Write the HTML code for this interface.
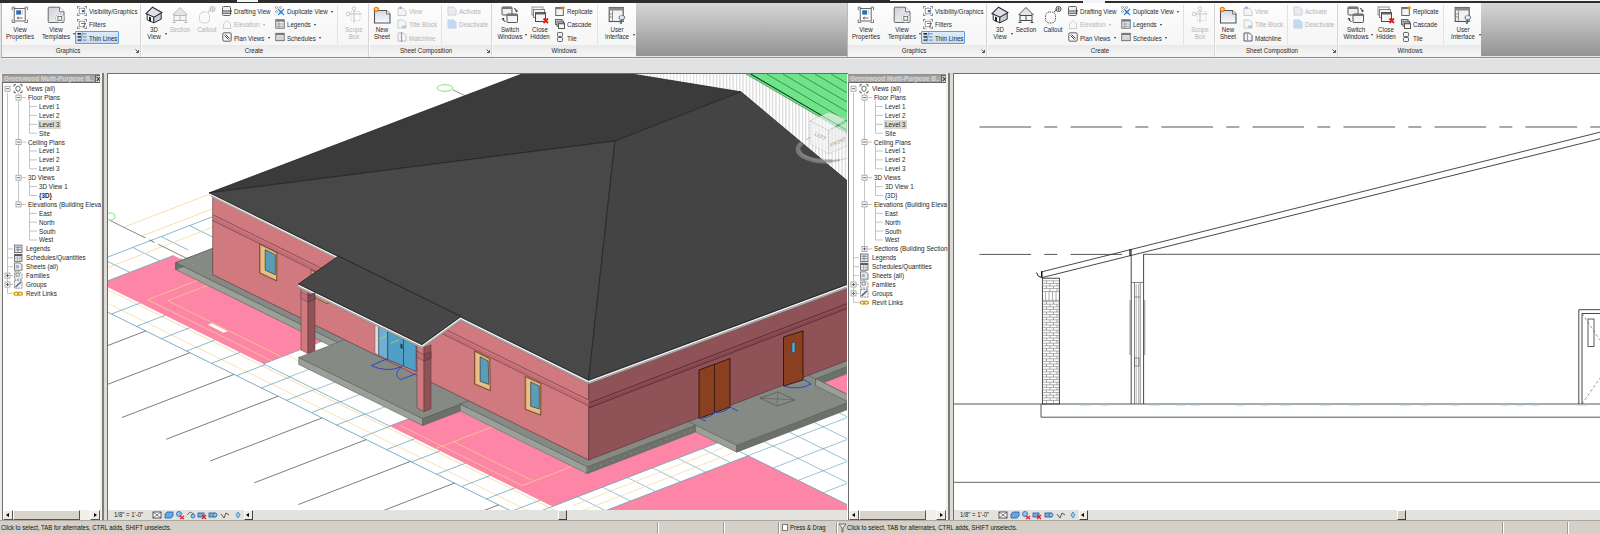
<!DOCTYPE html>
<html><head><meta charset="utf-8">
<style>
*{margin:0;padding:0;box-sizing:border-box}
html,body{width:1600px;height:534px;overflow:hidden;background:#e1e2e4;font-family:"Liberation Sans",sans-serif;font-size:6px;color:#333}
.a{position:absolute}
.t{position:absolute;white-space:nowrap;font-size:7px;line-height:7px;color:#2a2a2a;transform:scaleX(0.88);transform-origin:0 50%}
.c{transform-origin:50% 50%}
</style></head><body>
<div class="a" style="left:0px;top:0px;width:1600px;height:3px;background:#2d2d2d;"></div>
<div class="a" style="left:237px;top:0px;width:21px;height:2px;background:#f4f4f4;"></div>
<div class="a" style="left:890px;top:0px;width:710px;height:1px;background:#f8f8f8;"></div>
<div class="a" style="left:1083px;top:0px;width:22px;height:2.5px;background:#f4f4f4;"></div>
<div class="a" style="left:1px;top:3px;width:635px;height:42px;background:linear-gradient(#fefefe,#f8f8f8 60%,#f6f6f6);"></div>
<div class="a" style="left:1px;top:44.5px;width:635px;height:12.5px;background:linear-gradient(#e9e9e9,#f1f1f1 50%,#f5f5f5);"></div>
<div class="a" style="left:1px;top:57px;width:635px;height:1px;background:#8e8e8e;"></div>
<div class="a" style="left:1px;top:58px;width:635px;height:1px;background:#f0f0f0;"></div>
<div class="a" style="left:1px;top:3px;width:1px;height:54px;background:#b9b9b9;"></div>
<div class="a" style="left:140px;top:4px;width:1px;height:53px;background:#d6d6d6;"></div>
<div class="a" style="left:141px;top:4px;width:1px;height:53px;background:#fafafa;"></div>
<div class="a" style="left:368px;top:4px;width:1px;height:53px;background:#d6d6d6;"></div>
<div class="a" style="left:369px;top:4px;width:1px;height:53px;background:#fafafa;"></div>
<div class="a" style="left:491px;top:4px;width:1px;height:53px;background:#d6d6d6;"></div>
<div class="a" style="left:492px;top:4px;width:1px;height:53px;background:#fafafa;"></div>
<div class="a" style="left:337px;top:5px;width:1px;height:39px;background:#e2e2e2;"></div>
<div class="a" style="left:441px;top:5px;width:1px;height:39px;background:#e2e2e2;"></div>
<div class="a" style="left:597px;top:5px;width:1px;height:39px;background:#e2e2e2;"></div>
<div class="t c" style="left:28px;width:80px;text-align:center;top:47.0px;">Graphics</div>
<div class="t c" style="left:214px;width:80px;text-align:center;top:47.0px;">Create</div>
<div class="t c" style="left:386px;width:80px;text-align:center;top:47.0px;">Sheet Composition</div>
<div class="t c" style="left:524px;width:80px;text-align:center;top:47.0px;">Windows</div>
<svg class="a" style="left:135px;top:49px" width="4" height="4"><path d="M0.5 0.5L3.2 3.2M3.5 1V3.5H1" fill="none" stroke="#444" stroke-width="0.9"/></svg>
<svg class="a" style="left:486px;top:49px" width="4" height="4"><path d="M0.5 0.5L3.2 3.2M3.5 1V3.5H1" fill="none" stroke="#444" stroke-width="0.9"/></svg>
<svg class="a" style="left:11px;top:6px" width="18" height="18" viewBox="0 0 18 18"><path d="M1.2 4.2V1.2H4.2M13.5 1.2H16.5V4.2M16.5 13.5V16.5H13.5M4.2 16.5H1.2V13.5" fill="none" stroke="#6a6a6a" stroke-width="0.9"/><rect x="3.2" y="2.5" width="11" height="12.5" fill="#fdfdfd" stroke="#5a5a5a" stroke-width="0.9"/><rect x="5.2" y="4.3" width="4.8" height="4.3" fill="#2f6db3"/><path d="M11.3 4.3V8.6" stroke="#aaa" stroke-width="0.8"/><path d="M6.2 12H11.5M6.2 12L7.6 10.9M6.2 12L7.6 13.1" stroke="#444" stroke-width="0.8" fill="none"/></svg>
<div class="t c" style="left:-20px;width:80px;text-align:center;top:26.0px;">View</div>
<div class="t c" style="left:-20px;width:80px;text-align:center;top:33.0px;">Properties</div>
<svg class="a" style="left:47px;top:6px" width="18" height="18" viewBox="0 0 18 18"><defs><linearGradient id="gvt" x1="0" y1="0" x2="1" y2="1"><stop offset="0" stop-color="#c9ced6"/><stop offset="1" stop-color="#fbfbfb"/></linearGradient></defs><path d="M1.2 2.2Q1.2 1.2 2.2 1.2H12.5L17 5.8V15.5Q17 16.5 16 16.5H2.2Q1.2 16.5 1.2 15.5Z" fill="url(#gvt)" stroke="#5a5a5a" stroke-width="0.9"/><path d="M12.5 1.2V5.8H17" fill="#fff" stroke="#5a5a5a" stroke-width="0.8"/><circle cx="12.8" cy="12.3" r="4.3" fill="#fff" stroke="#888" stroke-width="0.7" stroke-dasharray="1.5 1"/><rect x="10.8" y="10.3" width="4" height="4" fill="#eee" stroke="#555" stroke-width="0.8"/></svg>
<div class="t c" style="left:16px;width:80px;text-align:center;top:26.0px;">View</div>
<div class="t c" style="left:16px;width:80px;text-align:center;top:33.0px;">Templates</div>
<svg class="a" style="left:145px;top:6px" width="18" height="18" viewBox="0 0 18 18"><path d="M2.2 7.2V13.8L8.8 16.8V10.8Z" fill="#fff" stroke="#2e2e2e" stroke-width="1"/><path d="M8.8 16.8L16.2 13.2V7L8.8 10.8Z" fill="#c9ced6" stroke="#2e2e2e" stroke-width="1"/><path d="M1 7.6L7.5 1.2L16.8 6.6L9 11.2Z" fill="#dde1e8" stroke="#2e2e2e" stroke-width="1.1"/><path d="M4 10.5V15L6 15.9V11.4Z" fill="#1e1e1e"/></svg>
<div class="t c" style="left:114px;width:80px;text-align:center;top:26.0px;">3D</div>
<div class="t c" style="left:114px;width:80px;text-align:center;top:33.0px;">View</div>
<svg class="a" style="left:171px;top:6px" width="18" height="18" viewBox="0 0 18 18"><path d="M2 9.2L9 2L16 9.2Z" fill="#e2e5ea"/><rect x="3" y="9.5" width="12" height="5" fill="#f6f6f6"/><path d="M1.5 9L9 1.5L16.5 9M3 8V16.5M15 8V16.5M3 9.5H15M3 14.5H15M9 9.5V14.5M1.5 16.5H4.5M13.5 16.5H16.5" fill="none" stroke="#b9b9b9" stroke-width="1"/></svg>
<div class="t c" style="left:140px;width:80px;text-align:center;top:26.0px;color:#b4b4b4;">Section</div>
<svg class="a" style="left:198px;top:6px" width="18" height="18" viewBox="0 0 18 18"><rect x="1.5" y="6" width="10" height="11" rx="4" fill="none" stroke="#b9b9b9" stroke-width="1" stroke-dasharray="1.5 1"/><path d="M10 6L13 3.5" stroke="#b9b9b9"/><circle cx="14.5" cy="3" r="2.6" fill="none" stroke="#b9b9b9"/><path d="M12.5 3H16.5M14.5 1V5" stroke="#b9b9b9" stroke-width="0.7"/></svg>
<div class="t c" style="left:167px;width:80px;text-align:center;top:26.0px;color:#b4b4b4;">Callout</div>
<svg class="a" style="left:345px;top:6px" width="18" height="18" viewBox="0 0 18 18"><circle cx="9" cy="2.5" r="1.8" fill="none" stroke="#c8c8c8"/><circle cx="3" cy="8" r="1.8" fill="none" stroke="#c8c8c8"/><rect x="6" y="5.5" width="9" height="9" fill="none" stroke="#bcd4ee" stroke-dasharray="1 1"/><path d="M9 4.3V17M4.8 8H16.5" stroke="#c4c4c4"/></svg>
<div class="t c" style="left:314px;width:80px;text-align:center;top:26.0px;color:#b4b4b4;">Scope</div>
<div class="t c" style="left:314px;width:80px;text-align:center;top:33.0px;color:#b4b4b4;">Box</div>
<svg class="a" style="left:373px;top:6px" width="18" height="18" viewBox="0 0 18 18"><defs><linearGradient id="gns" x1="0" y1="0" x2="0" y2="1"><stop offset="0" stop-color="#d3d7de"/><stop offset="1" stop-color="#fbfbfb"/></linearGradient></defs><path d="M1.5 4.5H13.5L17 8V17H1.5Z" fill="url(#gns)" stroke="#555" stroke-width="1.1"/><path d="M13.5 4.5V8H17" fill="#fff" stroke="#555" stroke-width="0.8"/><circle cx="3.3" cy="3.3" r="2.6" fill="#f07a10"/><circle cx="3.3" cy="3.3" r="1.3" fill="#ffe070"/></svg>
<div class="t c" style="left:342px;width:80px;text-align:center;top:26.0px;">New</div>
<div class="t c" style="left:342px;width:80px;text-align:center;top:33.0px;">Sheet</div>
<svg class="a" style="left:501px;top:6px" width="18" height="18" viewBox="0 0 18 18"><rect x="1" y="1" width="10" height="8" rx="0.8" fill="#f0f0f0" stroke="#555" stroke-width="1"/><rect x="1" y="1" width="10" height="2" fill="#777"/><rect x="6" y="8" width="10.5" height="8.5" rx="0.8" fill="#f4f4f4" stroke="#555" stroke-width="1"/><rect x="6" y="8" width="10.5" height="2" fill="#777"/><path d="M13 2.5Q15.5 2.5 15.5 5.5M14.5 4.5L15.5 6L16.5 4.5M4.5 15.5Q2 15.5 2 12.5M1 13.5L2 12L3 13.5" fill="none" stroke="#222" stroke-width="0.9"/></svg>
<div class="t c" style="left:470px;width:80px;text-align:center;top:26.0px;">Switch</div>
<div class="t c" style="left:470px;width:80px;text-align:center;top:33.0px;">Windows</div>
<svg class="a" style="left:531px;top:6px" width="18" height="18" viewBox="0 0 18 18"><rect x="1" y="1" width="11" height="8" fill="#f4f4f4" stroke="#888" stroke-width="0.9"/><rect x="2.5" y="3.5" width="11" height="8" fill="#f4f4f4" stroke="#777" stroke-width="0.9"/><rect x="4.5" y="6.5" width="10" height="9" fill="#f6f6f6" stroke="#4a4a4a" stroke-width="1"/><rect x="4.5" y="6.5" width="10" height="2" fill="#666"/><path d="M12.5 12.5L17 17M17 12.5L12.5 17" stroke="#e01c1c" stroke-width="1.8"/></svg>
<div class="t c" style="left:500px;width:80px;text-align:center;top:26.0px;">Close</div>
<div class="t c" style="left:500px;width:80px;text-align:center;top:33.0px;">Hidden</div>
<svg class="a" style="left:608px;top:6px" width="18" height="18" viewBox="0 0 18 18"><rect x="1.2" y="1.5" width="14" height="14" fill="#f2f2f2" stroke="#555" stroke-width="1.1"/><rect x="1.2" y="1.5" width="14" height="3" fill="#8a8a8a"/><path d="M4.5 4.5V15.5M1.2 8H4.5M1.2 11H4.5" stroke="#777" stroke-width="0.8"/><path d="M13.5 9.5A2.2 2.2 0 1 1 13.5 13.5V17.5H12.3V13.5A2.2 2.2 0 0 1 12.3 9.5" fill="#dde6ef" stroke="#4a5a6a" stroke-width="0.9"/></svg>
<div class="t c" style="left:577px;width:80px;text-align:center;top:26.0px;">User</div>
<div class="t c" style="left:577px;width:80px;text-align:center;top:33.0px;">Interface</div>
<div class="a" style="left:73px;top:32.5px;width:0;height:0;border-left:1.5px solid transparent;border-right:1.5px solid transparent;border-top:2px solid #333"></div>
<div class="a" style="left:164.5px;top:32.5px;width:0;height:0;border-left:1.5px solid transparent;border-right:1.5px solid transparent;border-top:2px solid #333"></div>
<div class="a" style="left:524.5px;top:33.5px;width:0;height:0;border-left:1.5px solid transparent;border-right:1.5px solid transparent;border-top:2px solid #333"></div>
<div class="a" style="left:632.5px;top:33.5px;width:0;height:0;border-left:1.5px solid transparent;border-right:1.5px solid transparent;border-top:2px solid #333"></div>
<div class="a" style="left:75px;top:31px;width:44px;height:13px;background:linear-gradient(#dcebfa,#c3dbf5);border:1px solid #5d9de6;border-radius:1px;"></div>
<svg class="a" style="left:77px;top:6px" width="10" height="10" viewBox="0 0 10 10"><path d="M0.5 2.5V0.5H2.5M7.5 0.5H9.5V2.5M9.5 7.5V9.5H7.5M2.5 9.5H0.5V7.5" fill="none" stroke="#666" stroke-width="0.8"/><rect x="2.2" y="2.2" width="5.6" height="5.6" fill="#fff" stroke="#777" stroke-width="0.7"/><rect x="4.8" y="4" width="2.6" height="2.2" fill="#2f6db3"/></svg>
<div class="t" style="left:89px;top:8.0px;">Visibility/Graphics</div>
<svg class="a" style="left:77px;top:19px" width="10" height="10" viewBox="0 0 10 10"><path d="M0.5 2.5V0.5H2.5M7.5 0.5H9.5V2.5M9.5 7.5V9.5H7.5M2.5 9.5H0.5V7.5" fill="none" stroke="#666" stroke-width="0.8"/><rect x="2.2" y="2.2" width="5.6" height="5.6" fill="#fff" stroke="#777" stroke-width="0.7"/><path d="M4 4.5H8.5L6.8 6.5V8.8" fill="none" stroke="#444" stroke-width="0.7"/></svg>
<div class="t" style="left:89px;top:21.0px;">Filters</div>
<svg class="a" style="left:77px;top:32px" width="10" height="10" viewBox="0 0 10 10"><rect x="0.5" y="1" width="3.5" height="1.6" fill="#222"/><rect x="0.5" y="4.2" width="3.5" height="1.4" fill="#222"/><rect x="0.5" y="7.5" width="3.5" height="1.2" fill="#222"/><path d="M6 1.8H9.5M6 4.9H9.5M6 8.1H9.5" stroke="#555" stroke-width="0.7"/><path d="M5.5 0.5L4 9.5" stroke="#3a7bd5" stroke-width="0.8"/></svg>
<div class="t" style="left:89px;top:34.5px;">Thin Lines</div>
<svg class="a" style="left:222px;top:6px" width="10" height="10" viewBox="0 0 10 10"><rect x="0.5" y="0.5" width="8" height="9" rx="1" fill="#eef0f3" stroke="#555" stroke-width="0.9"/><path d="M1 5H9.5M1 7.2H9.5" stroke="#333" stroke-width="0.9"/><path d="M8.5 4.2L9.6 5L8.5 5.8" fill="none" stroke="#333" stroke-width="0.7"/></svg>
<div class="t" style="left:234px;top:8.0px;">Drafting View</div>
<svg class="a" style="left:222px;top:19px" width="10" height="10" viewBox="0 0 10 10"><path d="M1 9.5H9M1.5 9V5L5 1.5L8.5 5V9" fill="none" stroke="#c8c8c8" stroke-width="0.9"/></svg>
<div class="t" style="left:234px;top:21.0px;color:#b4b4b4;">Elevation</div>
<div class="a" style="left:263px;top:23.5px;width:0;height:0;border-left:1.5px solid transparent;border-right:1.5px solid transparent;border-top:2px solid #aaa"></div>
<svg class="a" style="left:222px;top:32px" width="10" height="10" viewBox="0 0 10 10"><rect x="0.8" y="0.8" width="8.4" height="8.4" rx="1.2" fill="#f4f4f4" stroke="#555" stroke-width="0.9"/><path d="M2.5 3.5L6.5 7.5M3.5 2.5L7.5 6.5" stroke="#333" stroke-width="0.9"/></svg>
<div class="t" style="left:234px;top:34.5px;">Plan Views</div>
<div class="a" style="left:268px;top:37.0px;width:0;height:0;border-left:1.5px solid transparent;border-right:1.5px solid transparent;border-top:2px solid #333"></div>
<svg class="a" style="left:275px;top:6px" width="10" height="10" viewBox="0 0 10 10"><circle cx="1.5" cy="1.5" r="1" fill="none" stroke="#666" stroke-width="0.6"/><circle cx="5.5" cy="1.5" r="1" fill="none" stroke="#666" stroke-width="0.6"/><circle cx="1.5" cy="5.5" r="1" fill="none" stroke="#666" stroke-width="0.6"/><path d="M3 3L9 9M9 3L3 9" stroke="#2a7fd8" stroke-width="1.1"/><circle cx="6" cy="6" r="1.5" fill="#2a7fd8"/></svg>
<div class="t" style="left:287px;top:8.0px;">Duplicate View</div>
<div class="a" style="left:331px;top:10.5px;width:0;height:0;border-left:1.5px solid transparent;border-right:1.5px solid transparent;border-top:2px solid #333"></div>
<svg class="a" style="left:275px;top:19px" width="10" height="10" viewBox="0 0 10 10"><rect x="0.8" y="0.8" width="8.4" height="8.4" fill="#eef0f3" stroke="#555" stroke-width="0.8"/><rect x="0.8" y="0.8" width="8.4" height="1.8" fill="#777"/><path d="M1.5 5H8.5M1.5 7.3H8.5M4 3V9" stroke="#777" stroke-width="0.6"/></svg>
<div class="t" style="left:287px;top:21.0px;">Legends</div>
<div class="a" style="left:314px;top:23.5px;width:0;height:0;border-left:1.5px solid transparent;border-right:1.5px solid transparent;border-top:2px solid #333"></div>
<svg class="a" style="left:275px;top:32px" width="10" height="10" viewBox="0 0 10 10"><rect x="0.8" y="1.3" width="8.4" height="7.4" fill="#eef0f3" stroke="#555" stroke-width="0.8"/><rect x="0.8" y="1.3" width="8.4" height="1.8" fill="#777"/><path d="M1.5 5H8.5M1.5 7H8.5" stroke="#999" stroke-width="0.6"/></svg>
<div class="t" style="left:287px;top:34.5px;">Schedules</div>
<div class="a" style="left:319px;top:37.0px;width:0;height:0;border-left:1.5px solid transparent;border-right:1.5px solid transparent;border-top:2px solid #333"></div>
<svg class="a" style="left:397px;top:6px" width="10" height="10" viewBox="0 0 10 10"><path d="M1 2H6L9 5V9.5H1Z" fill="#f4f4f4" stroke="#c6c6c6" stroke-width="0.9"/><circle cx="3.5" cy="1.8" r="1.3" fill="#7fb0e0"/></svg>
<div class="t" style="left:409px;top:8.0px;color:#b4b4b4;">View</div>
<svg class="a" style="left:397px;top:19px" width="10" height="10" viewBox="0 0 10 10"><path d="M1 1H6.5L9 3.5V9H1Z" fill="#f6f6f6" stroke="#c6c6c6" stroke-width="0.9"/><rect x="5" y="6.5" width="4" height="2.5" fill="#a9c8ea"/></svg>
<div class="t" style="left:409px;top:21.0px;color:#b4b4b4;">Title Block</div>
<svg class="a" style="left:397px;top:32px" width="10" height="10" viewBox="0 0 10 10"><path d="M1 1H6.5L9 3.5V9H1Z" fill="#f6f6f6" stroke="#b9b9b9" stroke-width="0.9"/><path d="M4.5 0V10" stroke="#6fa8e8" stroke-width="1.2"/></svg>
<div class="t" style="left:409px;top:34.5px;color:#b4b4b4;">Matchline</div>
<svg class="a" style="left:447px;top:6px" width="10" height="10" viewBox="0 0 10 10"><path d="M1 1H6.5L9 3.5V9H1Z" fill="#f6f6f6" stroke="#c6c6c6" stroke-width="0.9"/><path d="M2.5 3H7.5M2.5 5H7.5M2.5 7H7.5" stroke="#a9c8ea" stroke-width="0.9" stroke-dasharray="1 1"/></svg>
<div class="t" style="left:459px;top:8.0px;color:#b4b4b4;">Activate</div>
<svg class="a" style="left:447px;top:19px" width="10" height="10" viewBox="0 0 10 10"><path d="M1 1H6.5L9 3.5V9H1Z" fill="#d4e4f5" stroke="#b0cbe8" stroke-width="0.9"/><path d="M2.5 3H7.5M2.5 5H7.5M2.5 7H7.5" stroke="#8fb4e0" stroke-width="0.9" stroke-dasharray="1 1"/></svg>
<div class="t" style="left:459px;top:21.0px;color:#b4b4b4;">Deactivate</div>
<svg class="a" style="left:555px;top:6px" width="10" height="10" viewBox="0 0 10 10"><rect x="0.8" y="1.5" width="7.5" height="8" fill="#f4f4f4" stroke="#555" stroke-width="0.9"/><rect x="0.8" y="1.5" width="7.5" height="1.6" fill="#777"/><circle cx="8.2" cy="1.8" r="1.6" fill="#f08a10"/></svg>
<div class="t" style="left:567px;top:8.0px;">Replicate</div>
<svg class="a" style="left:555px;top:19px" width="10" height="10" viewBox="0 0 10 10"><rect x="0.5" y="0.5" width="6.5" height="5" fill="#eee" stroke="#555" stroke-width="0.9"/><rect x="2" y="2.2" width="6.5" height="5" fill="#eee" stroke="#555" stroke-width="0.9"/><rect x="3.5" y="4" width="6" height="5.5" fill="#f6f6f6" stroke="#444" stroke-width="0.9"/><rect x="3.5" y="4" width="6" height="1.3" fill="#666"/></svg>
<div class="t" style="left:567px;top:21.0px;">Cascade</div>
<svg class="a" style="left:555px;top:32px" width="10" height="10" viewBox="0 0 10 10"><rect x="2.5" y="0.5" width="5" height="4" rx="0.8" fill="#f2f2f2" stroke="#555" stroke-width="0.9"/><rect x="2.5" y="5.5" width="5" height="4" rx="0.8" fill="#f2f2f2" stroke="#555" stroke-width="0.9"/></svg>
<div class="t" style="left:567px;top:34.5px;">Tile</div>
<div class="a" style="left:847px;top:3px;width:635px;height:42px;background:linear-gradient(#fefefe,#f8f8f8 60%,#f6f6f6);"></div>
<div class="a" style="left:847px;top:44.5px;width:635px;height:12.5px;background:linear-gradient(#e9e9e9,#f1f1f1 50%,#f5f5f5);"></div>
<div class="a" style="left:847px;top:57px;width:635px;height:1px;background:#8e8e8e;"></div>
<div class="a" style="left:847px;top:58px;width:635px;height:1px;background:#f0f0f0;"></div>
<div class="a" style="left:847px;top:3px;width:1px;height:54px;background:#b9b9b9;"></div>
<div class="a" style="left:986px;top:4px;width:1px;height:53px;background:#d6d6d6;"></div>
<div class="a" style="left:987px;top:4px;width:1px;height:53px;background:#fafafa;"></div>
<div class="a" style="left:1214px;top:4px;width:1px;height:53px;background:#d6d6d6;"></div>
<div class="a" style="left:1215px;top:4px;width:1px;height:53px;background:#fafafa;"></div>
<div class="a" style="left:1337px;top:4px;width:1px;height:53px;background:#d6d6d6;"></div>
<div class="a" style="left:1338px;top:4px;width:1px;height:53px;background:#fafafa;"></div>
<div class="a" style="left:1183px;top:5px;width:1px;height:39px;background:#e2e2e2;"></div>
<div class="a" style="left:1287px;top:5px;width:1px;height:39px;background:#e2e2e2;"></div>
<div class="a" style="left:1443px;top:5px;width:1px;height:39px;background:#e2e2e2;"></div>
<div class="t c" style="left:874px;width:80px;text-align:center;top:47.0px;">Graphics</div>
<div class="t c" style="left:1060px;width:80px;text-align:center;top:47.0px;">Create</div>
<div class="t c" style="left:1232px;width:80px;text-align:center;top:47.0px;">Sheet Composition</div>
<div class="t c" style="left:1370px;width:80px;text-align:center;top:47.0px;">Windows</div>
<svg class="a" style="left:981px;top:49px" width="4" height="4"><path d="M0.5 0.5L3.2 3.2M3.5 1V3.5H1" fill="none" stroke="#444" stroke-width="0.9"/></svg>
<svg class="a" style="left:1332px;top:49px" width="4" height="4"><path d="M0.5 0.5L3.2 3.2M3.5 1V3.5H1" fill="none" stroke="#444" stroke-width="0.9"/></svg>
<svg class="a" style="left:857px;top:6px" width="18" height="18" viewBox="0 0 18 18"><path d="M1.2 4.2V1.2H4.2M13.5 1.2H16.5V4.2M16.5 13.5V16.5H13.5M4.2 16.5H1.2V13.5" fill="none" stroke="#6a6a6a" stroke-width="0.9"/><rect x="3.2" y="2.5" width="11" height="12.5" fill="#fdfdfd" stroke="#5a5a5a" stroke-width="0.9"/><rect x="5.2" y="4.3" width="4.8" height="4.3" fill="#2f6db3"/><path d="M11.3 4.3V8.6" stroke="#aaa" stroke-width="0.8"/><path d="M6.2 12H11.5M6.2 12L7.6 10.9M6.2 12L7.6 13.1" stroke="#444" stroke-width="0.8" fill="none"/></svg>
<div class="t c" style="left:826px;width:80px;text-align:center;top:26.0px;">View</div>
<div class="t c" style="left:826px;width:80px;text-align:center;top:33.0px;">Properties</div>
<svg class="a" style="left:893px;top:6px" width="18" height="18" viewBox="0 0 18 18"><defs><linearGradient id="gvt" x1="0" y1="0" x2="1" y2="1"><stop offset="0" stop-color="#c9ced6"/><stop offset="1" stop-color="#fbfbfb"/></linearGradient></defs><path d="M1.2 2.2Q1.2 1.2 2.2 1.2H12.5L17 5.8V15.5Q17 16.5 16 16.5H2.2Q1.2 16.5 1.2 15.5Z" fill="url(#gvt)" stroke="#5a5a5a" stroke-width="0.9"/><path d="M12.5 1.2V5.8H17" fill="#fff" stroke="#5a5a5a" stroke-width="0.8"/><circle cx="12.8" cy="12.3" r="4.3" fill="#fff" stroke="#888" stroke-width="0.7" stroke-dasharray="1.5 1"/><rect x="10.8" y="10.3" width="4" height="4" fill="#eee" stroke="#555" stroke-width="0.8"/></svg>
<div class="t c" style="left:862px;width:80px;text-align:center;top:26.0px;">View</div>
<div class="t c" style="left:862px;width:80px;text-align:center;top:33.0px;">Templates</div>
<svg class="a" style="left:991px;top:6px" width="18" height="18" viewBox="0 0 18 18"><path d="M2.2 7.2V13.8L8.8 16.8V10.8Z" fill="#fff" stroke="#2e2e2e" stroke-width="1"/><path d="M8.8 16.8L16.2 13.2V7L8.8 10.8Z" fill="#c9ced6" stroke="#2e2e2e" stroke-width="1"/><path d="M1 7.6L7.5 1.2L16.8 6.6L9 11.2Z" fill="#dde1e8" stroke="#2e2e2e" stroke-width="1.1"/><path d="M4 10.5V15L6 15.9V11.4Z" fill="#1e1e1e"/></svg>
<div class="t c" style="left:960px;width:80px;text-align:center;top:26.0px;">3D</div>
<div class="t c" style="left:960px;width:80px;text-align:center;top:33.0px;">View</div>
<svg class="a" style="left:1017px;top:6px" width="18" height="18" viewBox="0 0 18 18"><path d="M2 9.2L9 2L16 9.2Z" fill="#e2e5ea"/><rect x="3" y="9.5" width="12" height="5" fill="#f6f6f6"/><path d="M1.5 9L9 1.5L16.5 9M3 8V16.5M15 8V16.5M3 9.5H15M3 14.5H15M9 9.5V14.5M1.5 16.5H4.5M13.5 16.5H16.5" fill="none" stroke="#4a4a4a" stroke-width="1"/></svg>
<div class="t c" style="left:986px;width:80px;text-align:center;top:26.0px;">Section</div>
<svg class="a" style="left:1044px;top:6px" width="18" height="18" viewBox="0 0 18 18"><rect x="1.5" y="6" width="10" height="11" rx="4" fill="none" stroke="#4a4a4a" stroke-width="1" stroke-dasharray="1.5 1"/><path d="M10 6L13 3.5" stroke="#4a4a4a"/><circle cx="14.5" cy="3" r="2.6" fill="none" stroke="#4a4a4a"/><path d="M12.5 3H16.5M14.5 1V5" stroke="#4a4a4a" stroke-width="0.7"/></svg>
<div class="t c" style="left:1013px;width:80px;text-align:center;top:26.0px;">Callout</div>
<svg class="a" style="left:1191px;top:6px" width="18" height="18" viewBox="0 0 18 18"><circle cx="9" cy="2.5" r="1.8" fill="none" stroke="#c8c8c8"/><circle cx="3" cy="8" r="1.8" fill="none" stroke="#c8c8c8"/><rect x="6" y="5.5" width="9" height="9" fill="none" stroke="#bcd4ee" stroke-dasharray="1 1"/><path d="M9 4.3V17M4.8 8H16.5" stroke="#c4c4c4"/></svg>
<div class="t c" style="left:1160px;width:80px;text-align:center;top:26.0px;color:#b4b4b4;">Scope</div>
<div class="t c" style="left:1160px;width:80px;text-align:center;top:33.0px;color:#b4b4b4;">Box</div>
<svg class="a" style="left:1219px;top:6px" width="18" height="18" viewBox="0 0 18 18"><defs><linearGradient id="gns" x1="0" y1="0" x2="0" y2="1"><stop offset="0" stop-color="#d3d7de"/><stop offset="1" stop-color="#fbfbfb"/></linearGradient></defs><path d="M1.5 4.5H13.5L17 8V17H1.5Z" fill="url(#gns)" stroke="#555" stroke-width="1.1"/><path d="M13.5 4.5V8H17" fill="#fff" stroke="#555" stroke-width="0.8"/><circle cx="3.3" cy="3.3" r="2.6" fill="#f07a10"/><circle cx="3.3" cy="3.3" r="1.3" fill="#ffe070"/></svg>
<div class="t c" style="left:1188px;width:80px;text-align:center;top:26.0px;">New</div>
<div class="t c" style="left:1188px;width:80px;text-align:center;top:33.0px;">Sheet</div>
<svg class="a" style="left:1347px;top:6px" width="18" height="18" viewBox="0 0 18 18"><rect x="1" y="1" width="10" height="8" rx="0.8" fill="#f0f0f0" stroke="#555" stroke-width="1"/><rect x="1" y="1" width="10" height="2" fill="#777"/><rect x="6" y="8" width="10.5" height="8.5" rx="0.8" fill="#f4f4f4" stroke="#555" stroke-width="1"/><rect x="6" y="8" width="10.5" height="2" fill="#777"/><path d="M13 2.5Q15.5 2.5 15.5 5.5M14.5 4.5L15.5 6L16.5 4.5M4.5 15.5Q2 15.5 2 12.5M1 13.5L2 12L3 13.5" fill="none" stroke="#222" stroke-width="0.9"/></svg>
<div class="t c" style="left:1316px;width:80px;text-align:center;top:26.0px;">Switch</div>
<div class="t c" style="left:1316px;width:80px;text-align:center;top:33.0px;">Windows</div>
<svg class="a" style="left:1377px;top:6px" width="18" height="18" viewBox="0 0 18 18"><rect x="1" y="1" width="11" height="8" fill="#f4f4f4" stroke="#888" stroke-width="0.9"/><rect x="2.5" y="3.5" width="11" height="8" fill="#f4f4f4" stroke="#777" stroke-width="0.9"/><rect x="4.5" y="6.5" width="10" height="9" fill="#f6f6f6" stroke="#4a4a4a" stroke-width="1"/><rect x="4.5" y="6.5" width="10" height="2" fill="#666"/><path d="M12.5 12.5L17 17M17 12.5L12.5 17" stroke="#e01c1c" stroke-width="1.8"/></svg>
<div class="t c" style="left:1346px;width:80px;text-align:center;top:26.0px;">Close</div>
<div class="t c" style="left:1346px;width:80px;text-align:center;top:33.0px;">Hidden</div>
<svg class="a" style="left:1454px;top:6px" width="18" height="18" viewBox="0 0 18 18"><rect x="1.2" y="1.5" width="14" height="14" fill="#f2f2f2" stroke="#555" stroke-width="1.1"/><rect x="1.2" y="1.5" width="14" height="3" fill="#8a8a8a"/><path d="M4.5 4.5V15.5M1.2 8H4.5M1.2 11H4.5" stroke="#777" stroke-width="0.8"/><path d="M13.5 9.5A2.2 2.2 0 1 1 13.5 13.5V17.5H12.3V13.5A2.2 2.2 0 0 1 12.3 9.5" fill="#dde6ef" stroke="#4a5a6a" stroke-width="0.9"/></svg>
<div class="t c" style="left:1423px;width:80px;text-align:center;top:26.0px;">User</div>
<div class="t c" style="left:1423px;width:80px;text-align:center;top:33.0px;">Interface</div>
<div class="a" style="left:919px;top:32.5px;width:0;height:0;border-left:1.5px solid transparent;border-right:1.5px solid transparent;border-top:2px solid #333"></div>
<div class="a" style="left:1010.5px;top:32.5px;width:0;height:0;border-left:1.5px solid transparent;border-right:1.5px solid transparent;border-top:2px solid #333"></div>
<div class="a" style="left:1370.5px;top:33.5px;width:0;height:0;border-left:1.5px solid transparent;border-right:1.5px solid transparent;border-top:2px solid #333"></div>
<div class="a" style="left:1478.5px;top:33.5px;width:0;height:0;border-left:1.5px solid transparent;border-right:1.5px solid transparent;border-top:2px solid #333"></div>
<div class="a" style="left:921px;top:31px;width:44px;height:13px;background:linear-gradient(#dcebfa,#c3dbf5);border:1px solid #5d9de6;border-radius:1px;"></div>
<svg class="a" style="left:923px;top:6px" width="10" height="10" viewBox="0 0 10 10"><path d="M0.5 2.5V0.5H2.5M7.5 0.5H9.5V2.5M9.5 7.5V9.5H7.5M2.5 9.5H0.5V7.5" fill="none" stroke="#666" stroke-width="0.8"/><rect x="2.2" y="2.2" width="5.6" height="5.6" fill="#fff" stroke="#777" stroke-width="0.7"/><rect x="4.8" y="4" width="2.6" height="2.2" fill="#2f6db3"/></svg>
<div class="t" style="left:935px;top:8.0px;">Visibility/Graphics</div>
<svg class="a" style="left:923px;top:19px" width="10" height="10" viewBox="0 0 10 10"><path d="M0.5 2.5V0.5H2.5M7.5 0.5H9.5V2.5M9.5 7.5V9.5H7.5M2.5 9.5H0.5V7.5" fill="none" stroke="#666" stroke-width="0.8"/><rect x="2.2" y="2.2" width="5.6" height="5.6" fill="#fff" stroke="#777" stroke-width="0.7"/><path d="M4 4.5H8.5L6.8 6.5V8.8" fill="none" stroke="#444" stroke-width="0.7"/></svg>
<div class="t" style="left:935px;top:21.0px;">Filters</div>
<svg class="a" style="left:923px;top:32px" width="10" height="10" viewBox="0 0 10 10"><rect x="0.5" y="1" width="3.5" height="1.6" fill="#222"/><rect x="0.5" y="4.2" width="3.5" height="1.4" fill="#222"/><rect x="0.5" y="7.5" width="3.5" height="1.2" fill="#222"/><path d="M6 1.8H9.5M6 4.9H9.5M6 8.1H9.5" stroke="#555" stroke-width="0.7"/><path d="M5.5 0.5L4 9.5" stroke="#3a7bd5" stroke-width="0.8"/></svg>
<div class="t" style="left:935px;top:34.5px;">Thin Lines</div>
<svg class="a" style="left:1068px;top:6px" width="10" height="10" viewBox="0 0 10 10"><rect x="0.5" y="0.5" width="8" height="9" rx="1" fill="#eef0f3" stroke="#555" stroke-width="0.9"/><path d="M1 5H9.5M1 7.2H9.5" stroke="#333" stroke-width="0.9"/><path d="M8.5 4.2L9.6 5L8.5 5.8" fill="none" stroke="#333" stroke-width="0.7"/></svg>
<div class="t" style="left:1080px;top:8.0px;">Drafting View</div>
<svg class="a" style="left:1068px;top:19px" width="10" height="10" viewBox="0 0 10 10"><path d="M1 9.5H9M1.5 9V5L5 1.5L8.5 5V9" fill="none" stroke="#c8c8c8" stroke-width="0.9"/></svg>
<div class="t" style="left:1080px;top:21.0px;color:#b4b4b4;">Elevation</div>
<div class="a" style="left:1109px;top:23.5px;width:0;height:0;border-left:1.5px solid transparent;border-right:1.5px solid transparent;border-top:2px solid #aaa"></div>
<svg class="a" style="left:1068px;top:32px" width="10" height="10" viewBox="0 0 10 10"><rect x="0.8" y="0.8" width="8.4" height="8.4" rx="1.2" fill="#f4f4f4" stroke="#555" stroke-width="0.9"/><path d="M2.5 3.5L6.5 7.5M3.5 2.5L7.5 6.5" stroke="#333" stroke-width="0.9"/></svg>
<div class="t" style="left:1080px;top:34.5px;">Plan Views</div>
<div class="a" style="left:1114px;top:37.0px;width:0;height:0;border-left:1.5px solid transparent;border-right:1.5px solid transparent;border-top:2px solid #333"></div>
<svg class="a" style="left:1121px;top:6px" width="10" height="10" viewBox="0 0 10 10"><circle cx="1.5" cy="1.5" r="1" fill="none" stroke="#666" stroke-width="0.6"/><circle cx="5.5" cy="1.5" r="1" fill="none" stroke="#666" stroke-width="0.6"/><circle cx="1.5" cy="5.5" r="1" fill="none" stroke="#666" stroke-width="0.6"/><path d="M3 3L9 9M9 3L3 9" stroke="#2a7fd8" stroke-width="1.1"/><circle cx="6" cy="6" r="1.5" fill="#2a7fd8"/></svg>
<div class="t" style="left:1133px;top:8.0px;">Duplicate View</div>
<div class="a" style="left:1177px;top:10.5px;width:0;height:0;border-left:1.5px solid transparent;border-right:1.5px solid transparent;border-top:2px solid #333"></div>
<svg class="a" style="left:1121px;top:19px" width="10" height="10" viewBox="0 0 10 10"><rect x="0.8" y="0.8" width="8.4" height="8.4" fill="#eef0f3" stroke="#555" stroke-width="0.8"/><rect x="0.8" y="0.8" width="8.4" height="1.8" fill="#777"/><path d="M1.5 5H8.5M1.5 7.3H8.5M4 3V9" stroke="#777" stroke-width="0.6"/></svg>
<div class="t" style="left:1133px;top:21.0px;">Legends</div>
<div class="a" style="left:1160px;top:23.5px;width:0;height:0;border-left:1.5px solid transparent;border-right:1.5px solid transparent;border-top:2px solid #333"></div>
<svg class="a" style="left:1121px;top:32px" width="10" height="10" viewBox="0 0 10 10"><rect x="0.8" y="1.3" width="8.4" height="7.4" fill="#eef0f3" stroke="#555" stroke-width="0.8"/><rect x="0.8" y="1.3" width="8.4" height="1.8" fill="#777"/><path d="M1.5 5H8.5M1.5 7H8.5" stroke="#999" stroke-width="0.6"/></svg>
<div class="t" style="left:1133px;top:34.5px;">Schedules</div>
<div class="a" style="left:1165px;top:37.0px;width:0;height:0;border-left:1.5px solid transparent;border-right:1.5px solid transparent;border-top:2px solid #333"></div>
<svg class="a" style="left:1243px;top:6px" width="10" height="10" viewBox="0 0 10 10"><path d="M1 2H6L9 5V9.5H1Z" fill="#f4f4f4" stroke="#c6c6c6" stroke-width="0.9"/><circle cx="3.5" cy="1.8" r="1.3" fill="#7fb0e0"/></svg>
<div class="t" style="left:1255px;top:8.0px;color:#b4b4b4;">View</div>
<svg class="a" style="left:1243px;top:19px" width="10" height="10" viewBox="0 0 10 10"><path d="M1 1H6.5L9 3.5V9H1Z" fill="#f6f6f6" stroke="#c6c6c6" stroke-width="0.9"/><rect x="5" y="6.5" width="4" height="2.5" fill="#a9c8ea"/></svg>
<div class="t" style="left:1255px;top:21.0px;color:#b4b4b4;">Title Block</div>
<svg class="a" style="left:1243px;top:32px" width="10" height="10" viewBox="0 0 10 10"><path d="M1 1H6.5L9 3.5V9H1Z" fill="#f6f6f6" stroke="#4a4a4a" stroke-width="0.9"/><path d="M4.5 0V10" stroke="#6fa8e8" stroke-width="1.2"/></svg>
<div class="t" style="left:1255px;top:34.5px;">Matchline</div>
<svg class="a" style="left:1293px;top:6px" width="10" height="10" viewBox="0 0 10 10"><path d="M1 1H6.5L9 3.5V9H1Z" fill="#f6f6f6" stroke="#c6c6c6" stroke-width="0.9"/><path d="M2.5 3H7.5M2.5 5H7.5M2.5 7H7.5" stroke="#a9c8ea" stroke-width="0.9" stroke-dasharray="1 1"/></svg>
<div class="t" style="left:1305px;top:8.0px;color:#b4b4b4;">Activate</div>
<svg class="a" style="left:1293px;top:19px" width="10" height="10" viewBox="0 0 10 10"><path d="M1 1H6.5L9 3.5V9H1Z" fill="#d4e4f5" stroke="#b0cbe8" stroke-width="0.9"/><path d="M2.5 3H7.5M2.5 5H7.5M2.5 7H7.5" stroke="#8fb4e0" stroke-width="0.9" stroke-dasharray="1 1"/></svg>
<div class="t" style="left:1305px;top:21.0px;color:#b4b4b4;">Deactivate</div>
<svg class="a" style="left:1401px;top:6px" width="10" height="10" viewBox="0 0 10 10"><rect x="0.8" y="1.5" width="7.5" height="8" fill="#f4f4f4" stroke="#555" stroke-width="0.9"/><rect x="0.8" y="1.5" width="7.5" height="1.6" fill="#777"/><circle cx="8.2" cy="1.8" r="1.6" fill="#f08a10"/></svg>
<div class="t" style="left:1413px;top:8.0px;">Replicate</div>
<svg class="a" style="left:1401px;top:19px" width="10" height="10" viewBox="0 0 10 10"><rect x="0.5" y="0.5" width="6.5" height="5" fill="#eee" stroke="#555" stroke-width="0.9"/><rect x="2" y="2.2" width="6.5" height="5" fill="#eee" stroke="#555" stroke-width="0.9"/><rect x="3.5" y="4" width="6" height="5.5" fill="#f6f6f6" stroke="#444" stroke-width="0.9"/><rect x="3.5" y="4" width="6" height="1.3" fill="#666"/></svg>
<div class="t" style="left:1413px;top:21.0px;">Cascade</div>
<svg class="a" style="left:1401px;top:32px" width="10" height="10" viewBox="0 0 10 10"><rect x="2.5" y="0.5" width="5" height="4" rx="0.8" fill="#f2f2f2" stroke="#555" stroke-width="0.9"/><rect x="2.5" y="5.5" width="5" height="4" rx="0.8" fill="#f2f2f2" stroke="#555" stroke-width="0.9"/></svg>
<div class="t" style="left:1413px;top:34.5px;">Tile</div>
<div class="a" style="left:636px;top:3px;width:211px;height:53px;background:linear-gradient(#d6d6d6,#939393);"></div>
<div class="a" style="left:636px;top:56px;width:211px;height:1px;background:#e8e8e8;"></div>
<div class="a" style="left:636px;top:57px;width:211px;height:1px;background:#8e8e8e;"></div>
<div class="a" style="left:636px;top:58px;width:211px;height:1px;background:#f0f0f0;"></div>
<div class="a" style="left:1481px;top:3px;width:119px;height:53px;background:linear-gradient(#d6d6d6,#939393);"></div>
<div class="a" style="left:1481px;top:56px;width:119px;height:1px;background:#e8e8e8;"></div>
<div class="a" style="left:1481px;top:57px;width:119px;height:1px;background:#8e8e8e;"></div>
<div class="a" style="left:1481px;top:58px;width:119px;height:1px;background:#f0f0f0;"></div>
<div class="a" style="left:0px;top:73px;width:2px;height:448px;background:#eeebe6;"></div>
<div class="a" style="left:2px;top:74px;width:98px;height:447px;background:#fff;border-left:1px solid #6f6f6f;border-bottom:1px solid #8a8a8a;"></div>
<div class="a" style="left:2px;top:74px;width:98px;height:9px;background:linear-gradient(#8c8c8c,#a8a8a8 40%,#a4a4a4);border-bottom:1px solid #6a6a6a;"></div>
<div class="t" style="left:3.5px;top:74.5px;font-weight:bold;color:#d9d5cc;font-size:7.2px;line-height:8px;transform:scaleX(0.89)">Greenwood Multi-Purpose B..</div>
<svg class="a" style="left:94.5px;top:74.5px" width="7" height="8"><rect x="0.5" y="0.5" width="6" height="7" fill="#c8c8c8" stroke="#555" stroke-width="0.8"/><path d="M1.8 2L5.2 6M5.2 2L1.8 6" stroke="#222" stroke-width="1"/></svg>
<div class="a" style="left:100px;top:73px;width:2px;height:448px;background:#f1efe9;"></div>
<div class="a" style="left:102px;top:73px;width:2px;height:448px;background:#7c7c7c;"></div>
<div class="a" style="left:104px;top:73px;width:3px;height:448px;background:#dedbd4;"></div>
<div class="t" style="left:26px;top:85.1px;color:#1e1e1e;font-size:7.2px">Views (all)</div>
<div class="t" style="left:28px;top:94.0px;color:#1e1e1e;font-size:7.2px">Floor Plans</div>
<div class="t" style="left:39px;top:102.9px;color:#1e1e1e;font-size:7.2px">Level 1</div>
<div class="t" style="left:39px;top:111.8px;color:#1e1e1e;font-size:7.2px">Level 2</div>
<div class="a" style="left:38px;top:119.70000000000002px;width:23px;height:9px;background:#dbd8d0;"></div>
<div class="t" style="left:39px;top:120.7px;color:#1e1e1e;font-size:7.2px">Level 3</div>
<div class="t" style="left:39px;top:129.6px;color:#1e1e1e;font-size:7.2px">Site</div>
<div class="t" style="left:28px;top:138.5px;color:#1e1e1e;font-size:7.2px">Ceiling Plans</div>
<div class="t" style="left:39px;top:147.4px;color:#1e1e1e;font-size:7.2px">Level 1</div>
<div class="t" style="left:39px;top:156.3px;color:#1e1e1e;font-size:7.2px">Level 2</div>
<div class="t" style="left:39px;top:165.2px;color:#1e1e1e;font-size:7.2px">Level 3</div>
<div class="t" style="left:28px;top:174.1px;color:#1e1e1e;font-size:7.2px">3D Views</div>
<div class="t" style="left:39px;top:183.0px;color:#1e1e1e;font-size:7.2px">3D View 1</div>
<div class="t" style="left:39px;top:191.9px;color:#1e1e1e;font-size:7.2px"><b>{3D}</b></div>
<div class="t" style="left:28px;top:200.8px;color:#1e1e1e;font-size:7.2px">Elevations (Building Eleva</div>
<div class="t" style="left:39px;top:209.7px;color:#1e1e1e;font-size:7.2px">East</div>
<div class="t" style="left:39px;top:218.6px;color:#1e1e1e;font-size:7.2px">North</div>
<div class="t" style="left:39px;top:227.5px;color:#1e1e1e;font-size:7.2px">South</div>
<div class="t" style="left:39px;top:236.4px;color:#1e1e1e;font-size:7.2px">West</div>
<div class="t" style="left:26px;top:245.3px;color:#1e1e1e;font-size:7.2px">Legends</div>
<div class="t" style="left:26px;top:254.2px;color:#1e1e1e;font-size:7.2px">Schedules/Quantities</div>
<div class="t" style="left:26px;top:263.1px;color:#1e1e1e;font-size:7.2px">Sheets (all)</div>
<div class="t" style="left:26px;top:272.0px;color:#1e1e1e;font-size:7.2px">Families</div>
<div class="t" style="left:26px;top:280.9px;color:#1e1e1e;font-size:7.2px">Groups</div>
<div class="t" style="left:26px;top:289.8px;color:#1e1e1e;font-size:7.2px">Revit Links</div>
<svg class="a" style="left:0px;top:0px" width="100" height="320"><line x1="7.5" y1="92.7" x2="7.5" y2="293.40000000000003" stroke="#c4c4c4" stroke-width="1"/><line x1="18.5" y1="92.7" x2="18.5" y2="204.4" stroke="#c4c4c4" stroke-width="1"/><line x1="18.5" y1="97.60000000000001" x2="26" y2="97.60000000000001" stroke="#c4c4c4"/><line x1="29.5" y1="106.5" x2="37" y2="106.5" stroke="#c4c4c4"/><line x1="29.5" y1="115.4" x2="37" y2="115.4" stroke="#c4c4c4"/><line x1="29.5" y1="124.30000000000001" x2="37" y2="124.30000000000001" stroke="#c4c4c4"/><line x1="29.5" y1="133.2" x2="37" y2="133.2" stroke="#c4c4c4"/><line x1="18.5" y1="142.10000000000002" x2="26" y2="142.10000000000002" stroke="#c4c4c4"/><line x1="29.5" y1="151.0" x2="37" y2="151.0" stroke="#c4c4c4"/><line x1="29.5" y1="159.9" x2="37" y2="159.9" stroke="#c4c4c4"/><line x1="29.5" y1="168.8" x2="37" y2="168.8" stroke="#c4c4c4"/><line x1="18.5" y1="177.7" x2="26" y2="177.7" stroke="#c4c4c4"/><line x1="29.5" y1="186.60000000000002" x2="37" y2="186.60000000000002" stroke="#c4c4c4"/><line x1="29.5" y1="195.5" x2="37" y2="195.5" stroke="#c4c4c4"/><line x1="18.5" y1="204.4" x2="26" y2="204.4" stroke="#c4c4c4"/><line x1="29.5" y1="213.3" x2="37" y2="213.3" stroke="#c4c4c4"/><line x1="29.5" y1="222.2" x2="37" y2="222.2" stroke="#c4c4c4"/><line x1="29.5" y1="231.10000000000002" x2="37" y2="231.10000000000002" stroke="#c4c4c4"/><line x1="29.5" y1="240.0" x2="37" y2="240.0" stroke="#c4c4c4"/><line x1="7.5" y1="248.90000000000003" x2="13" y2="248.90000000000003" stroke="#c4c4c4"/><line x1="7.5" y1="257.8" x2="13" y2="257.8" stroke="#c4c4c4"/><line x1="7.5" y1="266.7" x2="13" y2="266.7" stroke="#c4c4c4"/><line x1="7.5" y1="275.6" x2="13" y2="275.6" stroke="#c4c4c4"/><line x1="7.5" y1="284.5" x2="13" y2="284.5" stroke="#c4c4c4"/><line x1="7.5" y1="293.40000000000003" x2="13" y2="293.40000000000003" stroke="#c4c4c4"/><line x1="29.5" y1="100.60000000000001" x2="29.5" y2="133.2" stroke="#c4c4c4"/><line x1="29.5" y1="145.10000000000002" x2="29.5" y2="168.8" stroke="#c4c4c4"/><line x1="29.5" y1="180.7" x2="29.5" y2="195.5" stroke="#c4c4c4"/><line x1="29.5" y1="207.4" x2="29.5" y2="240.0" stroke="#c4c4c4"/><rect x="5.0" y="86.2" width="5" height="5" fill="#fff" stroke="#9a9a9a" stroke-width="0.8"/><line x1="6.0" y1="88.7" x2="9.0" y2="88.7" stroke="#444" stroke-width="0.8"/><path d="M14 86.7V84.7H16M20 84.7H22V86.7M22 90.7V92.7H20M16 92.7H14V90.7" fill="none" stroke="#555" stroke-width="0.9"/><ellipse cx="18" cy="88.7" rx="2.2" ry="2.6" fill="none" stroke="#555" stroke-width="0.9"/><rect x="16.0" y="95.10000000000001" width="5" height="5" fill="#fff" stroke="#9a9a9a" stroke-width="0.8"/><line x1="17.0" y1="97.60000000000001" x2="20.0" y2="97.60000000000001" stroke="#444" stroke-width="0.8"/><rect x="16.0" y="139.60000000000002" width="5" height="5" fill="#fff" stroke="#9a9a9a" stroke-width="0.8"/><line x1="17.0" y1="142.10000000000002" x2="20.0" y2="142.10000000000002" stroke="#444" stroke-width="0.8"/><rect x="16.0" y="175.2" width="5" height="5" fill="#fff" stroke="#9a9a9a" stroke-width="0.8"/><line x1="17.0" y1="177.7" x2="20.0" y2="177.7" stroke="#444" stroke-width="0.8"/><rect x="16.0" y="201.9" width="5" height="5" fill="#fff" stroke="#9a9a9a" stroke-width="0.8"/><line x1="17.0" y1="204.4" x2="20.0" y2="204.4" stroke="#444" stroke-width="0.8"/><rect x="14.5" y="245.10000000000002" width="7.5" height="7.5" fill="#dfe3ea" stroke="#5a6070" stroke-width="0.8"/><path d="M15.5 247.40000000000003H21M15.5 249.70000000000005H21M18 245.90000000000003V251.90000000000003" stroke="#6a7080" stroke-width="0.7"/><rect x="14.5" y="254.3" width="7.5" height="7" fill="#eceef2" stroke="#5a5a5a" stroke-width="0.8"/><rect x="14.5" y="254.3" width="7.5" height="1.8" fill="#555"/><path d="M15 258.3H22M17.5 256.3V261.3M20 256.3V261.3" stroke="#999" stroke-width="0.6"/><path d="M14.5 262.9H20L22 264.9V270.3H14.5Z" fill="#e6eaf0" stroke="#666" stroke-width="0.8"/><rect x="15.8" y="265.2" width="3" height="3" fill="#9ab0cc"/><rect x="5.0" y="273.1" width="5" height="5" fill="#fff" stroke="#9a9a9a" stroke-width="0.8"/><line x1="6.0" y1="275.6" x2="9.0" y2="275.6" stroke="#444" stroke-width="0.8"/><line x1="7.5" y1="274.1" x2="7.5" y2="277.1" stroke="#444" stroke-width="0.8"/><path d="M14.5 271.8H20L22 273.8V279.20000000000005H14.5Z" fill="#f2f2f2" stroke="#777" stroke-width="0.8" stroke-dasharray="2 0.8"/><rect x="16" y="273.1" width="3.2" height="3" fill="none" stroke="#666" stroke-width="0.7"/><rect x="5.0" y="282.0" width="5" height="5" fill="#fff" stroke="#9a9a9a" stroke-width="0.8"/><line x1="6.0" y1="284.5" x2="9.0" y2="284.5" stroke="#444" stroke-width="0.8"/><line x1="7.5" y1="283.0" x2="7.5" y2="286.0" stroke="#444" stroke-width="0.8"/><rect x="14.5" y="280.7" width="7.5" height="7.5" fill="#f4f4f4" stroke="#777" stroke-width="0.8" stroke-dasharray="2 0.8"/><path d="M15.5 287.0L21 282.0" stroke="#5a6a80" stroke-width="1.6"/><ellipse cx="16.5" cy="293.70000000000005" rx="2.3" ry="1.5" fill="none" stroke="#d09a10" stroke-width="1.3"/><ellipse cx="20" cy="293.70000000000005" rx="2.3" ry="1.5" fill="none" stroke="#d09a10" stroke-width="1.3"/></svg>
<div class="a" style="left:846px;top:73px;width:2px;height:448px;background:#eeebe6;"></div>
<div class="a" style="left:848px;top:74px;width:98px;height:447px;background:#fff;border-left:1px solid #6f6f6f;border-bottom:1px solid #8a8a8a;"></div>
<div class="a" style="left:848px;top:74px;width:98px;height:9px;background:linear-gradient(#8c8c8c,#a8a8a8 40%,#a4a4a4);border-bottom:1px solid #6a6a6a;"></div>
<div class="t" style="left:849.5px;top:74.5px;font-weight:bold;color:#d9d5cc;font-size:7.2px;line-height:8px;transform:scaleX(0.89)">Greenwood Multi-Purpose B..</div>
<svg class="a" style="left:940.5px;top:74.5px" width="7" height="8"><rect x="0.5" y="0.5" width="6" height="7" fill="#c8c8c8" stroke="#555" stroke-width="0.8"/><path d="M1.8 2L5.2 6M5.2 2L1.8 6" stroke="#222" stroke-width="1"/></svg>
<div class="a" style="left:946px;top:73px;width:2px;height:448px;background:#f1efe9;"></div>
<div class="a" style="left:948px;top:73px;width:2px;height:448px;background:#7c7c7c;"></div>
<div class="a" style="left:950px;top:73px;width:3px;height:448px;background:#dedbd4;"></div>
<div class="t" style="left:872px;top:85.1px;color:#1e1e1e;font-size:7.2px">Views (all)</div>
<div class="t" style="left:874px;top:94.0px;color:#1e1e1e;font-size:7.2px">Floor Plans</div>
<div class="t" style="left:885px;top:102.9px;color:#1e1e1e;font-size:7.2px">Level 1</div>
<div class="t" style="left:885px;top:111.8px;color:#1e1e1e;font-size:7.2px">Level 2</div>
<div class="a" style="left:884px;top:119.70000000000002px;width:23px;height:9px;background:#dbd8d0;"></div>
<div class="t" style="left:885px;top:120.7px;color:#1e1e1e;font-size:7.2px">Level 3</div>
<div class="t" style="left:885px;top:129.6px;color:#1e1e1e;font-size:7.2px">Site</div>
<div class="t" style="left:874px;top:138.5px;color:#1e1e1e;font-size:7.2px">Ceiling Plans</div>
<div class="t" style="left:885px;top:147.4px;color:#1e1e1e;font-size:7.2px">Level 1</div>
<div class="t" style="left:885px;top:156.3px;color:#1e1e1e;font-size:7.2px">Level 2</div>
<div class="t" style="left:885px;top:165.2px;color:#1e1e1e;font-size:7.2px">Level 3</div>
<div class="t" style="left:874px;top:174.1px;color:#1e1e1e;font-size:7.2px">3D Views</div>
<div class="t" style="left:885px;top:183.0px;color:#1e1e1e;font-size:7.2px">3D View 1</div>
<div class="t" style="left:885px;top:191.9px;color:#1e1e1e;font-size:7.2px">{3D}</div>
<div class="t" style="left:874px;top:200.8px;color:#1e1e1e;font-size:7.2px">Elevations (Building Eleva</div>
<div class="t" style="left:885px;top:209.7px;color:#1e1e1e;font-size:7.2px">East</div>
<div class="t" style="left:885px;top:218.6px;color:#1e1e1e;font-size:7.2px">North</div>
<div class="t" style="left:885px;top:227.5px;color:#1e1e1e;font-size:7.2px">South</div>
<div class="t" style="left:885px;top:236.4px;color:#1e1e1e;font-size:7.2px">West</div>
<div class="t" style="left:874px;top:245.3px;color:#1e1e1e;font-size:7.2px">Sections (Building Section</div>
<div class="t" style="left:872px;top:254.2px;color:#1e1e1e;font-size:7.2px">Legends</div>
<div class="t" style="left:872px;top:263.1px;color:#1e1e1e;font-size:7.2px">Schedules/Quantities</div>
<div class="t" style="left:872px;top:272.0px;color:#1e1e1e;font-size:7.2px">Sheets (all)</div>
<div class="t" style="left:872px;top:280.9px;color:#1e1e1e;font-size:7.2px">Families</div>
<div class="t" style="left:872px;top:289.8px;color:#1e1e1e;font-size:7.2px">Groups</div>
<div class="t" style="left:872px;top:298.7px;color:#1e1e1e;font-size:7.2px">Revit Links</div>
<svg class="a" style="left:846px;top:0px" width="100" height="320"><line x1="7.5" y1="92.7" x2="7.5" y2="302.3" stroke="#c4c4c4" stroke-width="1"/><line x1="18.5" y1="92.7" x2="18.5" y2="248.90000000000003" stroke="#c4c4c4" stroke-width="1"/><line x1="18.5" y1="97.60000000000001" x2="26" y2="97.60000000000001" stroke="#c4c4c4"/><line x1="29.5" y1="106.5" x2="37" y2="106.5" stroke="#c4c4c4"/><line x1="29.5" y1="115.4" x2="37" y2="115.4" stroke="#c4c4c4"/><line x1="29.5" y1="124.30000000000001" x2="37" y2="124.30000000000001" stroke="#c4c4c4"/><line x1="29.5" y1="133.2" x2="37" y2="133.2" stroke="#c4c4c4"/><line x1="18.5" y1="142.10000000000002" x2="26" y2="142.10000000000002" stroke="#c4c4c4"/><line x1="29.5" y1="151.0" x2="37" y2="151.0" stroke="#c4c4c4"/><line x1="29.5" y1="159.9" x2="37" y2="159.9" stroke="#c4c4c4"/><line x1="29.5" y1="168.8" x2="37" y2="168.8" stroke="#c4c4c4"/><line x1="18.5" y1="177.7" x2="26" y2="177.7" stroke="#c4c4c4"/><line x1="29.5" y1="186.60000000000002" x2="37" y2="186.60000000000002" stroke="#c4c4c4"/><line x1="29.5" y1="195.5" x2="37" y2="195.5" stroke="#c4c4c4"/><line x1="18.5" y1="204.4" x2="26" y2="204.4" stroke="#c4c4c4"/><line x1="29.5" y1="213.3" x2="37" y2="213.3" stroke="#c4c4c4"/><line x1="29.5" y1="222.2" x2="37" y2="222.2" stroke="#c4c4c4"/><line x1="29.5" y1="231.10000000000002" x2="37" y2="231.10000000000002" stroke="#c4c4c4"/><line x1="29.5" y1="240.0" x2="37" y2="240.0" stroke="#c4c4c4"/><line x1="18.5" y1="248.90000000000003" x2="26" y2="248.90000000000003" stroke="#c4c4c4"/><line x1="7.5" y1="257.8" x2="13" y2="257.8" stroke="#c4c4c4"/><line x1="7.5" y1="266.7" x2="13" y2="266.7" stroke="#c4c4c4"/><line x1="7.5" y1="275.6" x2="13" y2="275.6" stroke="#c4c4c4"/><line x1="7.5" y1="284.5" x2="13" y2="284.5" stroke="#c4c4c4"/><line x1="7.5" y1="293.40000000000003" x2="13" y2="293.40000000000003" stroke="#c4c4c4"/><line x1="7.5" y1="302.3" x2="13" y2="302.3" stroke="#c4c4c4"/><line x1="29.5" y1="100.60000000000001" x2="29.5" y2="133.2" stroke="#c4c4c4"/><line x1="29.5" y1="145.10000000000002" x2="29.5" y2="168.8" stroke="#c4c4c4"/><line x1="29.5" y1="180.7" x2="29.5" y2="195.5" stroke="#c4c4c4"/><line x1="29.5" y1="207.4" x2="29.5" y2="240.0" stroke="#c4c4c4"/><rect x="5.0" y="86.2" width="5" height="5" fill="#fff" stroke="#9a9a9a" stroke-width="0.8"/><line x1="6.0" y1="88.7" x2="9.0" y2="88.7" stroke="#444" stroke-width="0.8"/><path d="M14 86.7V84.7H16M20 84.7H22V86.7M22 90.7V92.7H20M16 92.7H14V90.7" fill="none" stroke="#555" stroke-width="0.9"/><ellipse cx="18" cy="88.7" rx="2.2" ry="2.6" fill="none" stroke="#555" stroke-width="0.9"/><rect x="16.0" y="95.10000000000001" width="5" height="5" fill="#fff" stroke="#9a9a9a" stroke-width="0.8"/><line x1="17.0" y1="97.60000000000001" x2="20.0" y2="97.60000000000001" stroke="#444" stroke-width="0.8"/><rect x="16.0" y="139.60000000000002" width="5" height="5" fill="#fff" stroke="#9a9a9a" stroke-width="0.8"/><line x1="17.0" y1="142.10000000000002" x2="20.0" y2="142.10000000000002" stroke="#444" stroke-width="0.8"/><rect x="16.0" y="175.2" width="5" height="5" fill="#fff" stroke="#9a9a9a" stroke-width="0.8"/><line x1="17.0" y1="177.7" x2="20.0" y2="177.7" stroke="#444" stroke-width="0.8"/><rect x="16.0" y="201.9" width="5" height="5" fill="#fff" stroke="#9a9a9a" stroke-width="0.8"/><line x1="17.0" y1="204.4" x2="20.0" y2="204.4" stroke="#444" stroke-width="0.8"/><rect x="16.0" y="246.40000000000003" width="5" height="5" fill="#fff" stroke="#9a9a9a" stroke-width="0.8"/><line x1="17.0" y1="248.90000000000003" x2="20.0" y2="248.90000000000003" stroke="#444" stroke-width="0.8"/><line x1="18.5" y1="247.40000000000003" x2="18.5" y2="250.40000000000003" stroke="#444" stroke-width="0.8"/><rect x="14.5" y="254.0" width="7.5" height="7.5" fill="#dfe3ea" stroke="#5a6070" stroke-width="0.8"/><path d="M15.5 256.3H21M15.5 258.6H21M18 254.8V260.8" stroke="#6a7080" stroke-width="0.7"/><rect x="14.5" y="263.2" width="7.5" height="7" fill="#eceef2" stroke="#5a5a5a" stroke-width="0.8"/><rect x="14.5" y="263.2" width="7.5" height="1.8" fill="#555"/><path d="M15 267.2H22M17.5 265.2V270.2M20 265.2V270.2" stroke="#999" stroke-width="0.6"/><path d="M14.5 271.8H20L22 273.8V279.20000000000005H14.5Z" fill="#e6eaf0" stroke="#666" stroke-width="0.8"/><rect x="15.8" y="274.1" width="3" height="3" fill="#9ab0cc"/><rect x="5.0" y="282.0" width="5" height="5" fill="#fff" stroke="#9a9a9a" stroke-width="0.8"/><line x1="6.0" y1="284.5" x2="9.0" y2="284.5" stroke="#444" stroke-width="0.8"/><line x1="7.5" y1="283.0" x2="7.5" y2="286.0" stroke="#444" stroke-width="0.8"/><path d="M14.5 280.7H20L22 282.7V288.1H14.5Z" fill="#f2f2f2" stroke="#777" stroke-width="0.8" stroke-dasharray="2 0.8"/><rect x="16" y="282.0" width="3.2" height="3" fill="none" stroke="#666" stroke-width="0.7"/><rect x="5.0" y="290.90000000000003" width="5" height="5" fill="#fff" stroke="#9a9a9a" stroke-width="0.8"/><line x1="6.0" y1="293.40000000000003" x2="9.0" y2="293.40000000000003" stroke="#444" stroke-width="0.8"/><line x1="7.5" y1="291.90000000000003" x2="7.5" y2="294.90000000000003" stroke="#444" stroke-width="0.8"/><rect x="14.5" y="289.6" width="7.5" height="7.5" fill="#f4f4f4" stroke="#777" stroke-width="0.8" stroke-dasharray="2 0.8"/><path d="M15.5 295.90000000000003L21 290.90000000000003" stroke="#5a6a80" stroke-width="1.6"/><ellipse cx="16.5" cy="302.6" rx="2.3" ry="1.5" fill="none" stroke="#d09a10" stroke-width="1.3"/><ellipse cx="20" cy="302.6" rx="2.3" ry="1.5" fill="none" stroke="#d09a10" stroke-width="1.3"/></svg>
<div class="a" style="left:107px;top:73px;width:741px;height:448px;background:#fff;border:1px solid #6d6d6d;border-right:none;"></div>
<div class="a" style="left:953px;top:73px;width:647px;height:448px;background:#fff;border:1px solid #6d6d6d;border-right:none;"></div>
<svg class="a" style="left:108px;top:74px" width="739" height="436" viewBox="108 74 739 436">
<defs><pattern id="vs" width="3.3" height="10" patternUnits="userSpaceOnUse"><rect x="0" y="0" width="1" height="10" fill="#dcdcdc"/></pattern><pattern id="gs" width="18" height="8.5" patternUnits="userSpaceOnUse" patternTransform="skewY(25)"><rect width="18" height="8.5" fill="#6fe48b"/><rect x="0" y="0" width="18" height="0.9" fill="#2f6a3c"/></pattern><clipPath id="vp"><rect x="108" y="74" width="739" height="436"/></clipPath></defs>
<rect x="108" y="74" width="739" height="436" fill="#fff"/>
<rect x="625" y="74" width="222" height="110" fill="url(#vs)"/>
<polygon points="746.0,74.0 847.0,74.0 847.0,133.0" fill="#6fe48b" stroke="none" stroke-width="0.8" />
<line x1="766.7" y1="74.0" x2="886.7" y2="144.1" stroke="#2d6b3a" stroke-width="0.7" />
<line x1="782.8" y1="74.0" x2="902.8" y2="144.1" stroke="#2d6b3a" stroke-width="0.7" />
<line x1="798.9" y1="74.0" x2="918.9" y2="144.1" stroke="#2d6b3a" stroke-width="0.7" />
<line x1="815.0" y1="74.0" x2="935.0" y2="144.1" stroke="#2d6b3a" stroke-width="0.7" />
<line x1="831.1" y1="74.0" x2="951.1" y2="144.1" stroke="#2d6b3a" stroke-width="0.7" />
<line x1="847.2" y1="74.0" x2="967.2" y2="144.1" stroke="#2d6b3a" stroke-width="0.7" />
<line x1="863.3" y1="74.0" x2="983.3" y2="144.1" stroke="#2d6b3a" stroke-width="0.7" />
<polygon points="847.0,133.0 847.0,200.0 700.0,74.0 746.0,74.0" fill="url(#vs)" stroke="none" stroke-width="0.8" />
<line x1="746.0" y1="74.0" x2="847.0" y2="133.0" stroke="#2d6b3a" stroke-width="0.6" />
<line x1="750.6" y1="74.0" x2="847.0" y2="130.3" stroke="#163d20" stroke-width="1.1" />
<polygon points="100.5,283.6 173.7,255.4 336.7,335.8 263.5,363.9" fill="#fd86a6" stroke="none" stroke-width="0.8" />
<polygon points="389.5,426.1 446.2,404.2 587.2,473.7 695.7,432.0 717.7,442.8 552.5,506.4" fill="#fd86a6" stroke="none" stroke-width="0.8" />
<polygon points="453.7,569.0 748.1,455.7 883.1,522.3 588.7,635.6" fill="#fd86a6" stroke="none" stroke-width="0.8" />
<polygon points="815.7,385.8 903.7,351.9 925.7,362.7 837.7,396.6" fill="#fd86a6" stroke="none" stroke-width="0.8" />
<line x1="-33.0" y1="242.8" x2="552.0" y2="531.2" stroke="#5b9ab5" stroke-width="0.8" />
<line x1="263.5" y1="363.9" x2="389.5" y2="426.1" stroke="#5b9ab5" stroke-width="0.7" />
<line x1="-4.5" y1="231.8" x2="93.5" y2="280.1" stroke="#5b9ab5" stroke-width="0.7" />
<line x1="-7.5" y1="233.0" x2="577.5" y2="521.4" stroke="#f2d488" stroke-width="0.7" />
<line x1="-23.0" y1="238.9" x2="562.0" y2="527.3" stroke="#f2d488" stroke-width="0.6" />
<line x1="286.7" y1="355.0" x2="412.7" y2="417.1" stroke="#f2d488" stroke-width="0.6" />
<line x1="111.5" y1="314.0" x2="140.0" y2="303.1" stroke="#5b9ab5" stroke-width="0.7" />
<line x1="136.5" y1="326.4" x2="165.0" y2="315.4" stroke="#5b9ab5" stroke-width="0.7" />
<line x1="161.5" y1="338.7" x2="190.0" y2="327.7" stroke="#5b9ab5" stroke-width="0.7" />
<line x1="186.5" y1="351.0" x2="215.0" y2="340.0" stroke="#5b9ab5" stroke-width="0.7" />
<line x1="211.5" y1="363.3" x2="240.0" y2="352.4" stroke="#5b9ab5" stroke-width="0.7" />
<line x1="236.5" y1="375.7" x2="265.0" y2="364.7" stroke="#5b9ab5" stroke-width="0.7" />
<line x1="261.5" y1="388.0" x2="290.0" y2="377.0" stroke="#5b9ab5" stroke-width="0.7" />
<line x1="286.5" y1="400.3" x2="315.0" y2="389.3" stroke="#5b9ab5" stroke-width="0.7" />
<line x1="311.5" y1="412.6" x2="340.0" y2="401.7" stroke="#5b9ab5" stroke-width="0.7" />
<line x1="336.5" y1="425.0" x2="365.0" y2="414.0" stroke="#5b9ab5" stroke-width="0.7" />
<line x1="361.5" y1="437.3" x2="390.0" y2="426.3" stroke="#5b9ab5" stroke-width="0.7" />
<line x1="386.5" y1="449.6" x2="415.0" y2="438.6" stroke="#5b9ab5" stroke-width="0.7" />
<line x1="411.5" y1="461.9" x2="440.0" y2="451.0" stroke="#5b9ab5" stroke-width="0.7" />
<line x1="436.5" y1="474.3" x2="465.0" y2="463.3" stroke="#5b9ab5" stroke-width="0.7" />
<line x1="461.5" y1="486.6" x2="490.0" y2="475.6" stroke="#5b9ab5" stroke-width="0.7" />
<line x1="486.5" y1="498.9" x2="515.0" y2="487.9" stroke="#5b9ab5" stroke-width="0.7" />
<line x1="511.5" y1="511.2" x2="540.0" y2="500.3" stroke="#5b9ab5" stroke-width="0.7" />
<line x1="536.5" y1="523.6" x2="565.0" y2="512.6" stroke="#5b9ab5" stroke-width="0.7" />
<line x1="263.5" y1="363.9" x2="321.7" y2="341.5" stroke="#5b9ab5" stroke-width="0.6" />
<line x1="289.5" y1="376.8" x2="347.7" y2="354.4" stroke="#5b9ab5" stroke-width="0.6" />
<line x1="315.5" y1="389.6" x2="373.7" y2="367.2" stroke="#5b9ab5" stroke-width="0.6" />
<line x1="340.5" y1="401.9" x2="398.7" y2="379.5" stroke="#5b9ab5" stroke-width="0.6" />
<line x1="365.5" y1="414.2" x2="423.7" y2="391.8" stroke="#5b9ab5" stroke-width="0.6" />
<line x1="389.5" y1="426.1" x2="447.7" y2="403.7" stroke="#5b9ab5" stroke-width="0.6" />
<line x1="57.6" y1="287.5" x2="-54.4" y2="330.6" stroke="#5c5c5c" stroke-width="0.8" />
<line x1="101.7" y1="309.2" x2="-10.3" y2="352.3" stroke="#5c5c5c" stroke-width="0.8" />
<line x1="145.8" y1="330.9" x2="33.8" y2="374.1" stroke="#5c5c5c" stroke-width="0.8" />
<line x1="189.9" y1="352.7" x2="77.9" y2="395.8" stroke="#5c5c5c" stroke-width="0.8" />
<line x1="234.0" y1="374.4" x2="122.0" y2="417.5" stroke="#5c5c5c" stroke-width="0.8" />
<line x1="278.1" y1="396.2" x2="166.1" y2="439.3" stroke="#5c5c5c" stroke-width="0.8" />
<line x1="322.2" y1="417.9" x2="210.2" y2="461.0" stroke="#5c5c5c" stroke-width="0.8" />
<line x1="366.3" y1="439.6" x2="254.3" y2="482.8" stroke="#5c5c5c" stroke-width="0.8" />
<line x1="410.4" y1="461.4" x2="298.4" y2="504.5" stroke="#5c5c5c" stroke-width="0.8" />
<line x1="454.5" y1="483.1" x2="342.5" y2="526.3" stroke="#5c5c5c" stroke-width="0.8" />
<line x1="498.6" y1="504.9" x2="386.6" y2="548.0" stroke="#5c5c5c" stroke-width="0.8" />
<line x1="542.7" y1="526.6" x2="430.7" y2="569.7" stroke="#5c5c5c" stroke-width="0.8" />
<line x1="524.0" y1="517.4" x2="837.7" y2="396.6" stroke="#5b9ab5" stroke-width="0.7" />
<line x1="552.0" y1="531.2" x2="748.1" y2="455.7" stroke="#5b9ab5" stroke-width="0.7" />
<line x1="577.5" y1="496.8" x2="605.5" y2="510.6" stroke="#5b9ab5" stroke-width="0.6" />
<line x1="602.5" y1="487.2" x2="630.5" y2="501.0" stroke="#5b9ab5" stroke-width="0.6" />
<line x1="627.5" y1="477.5" x2="655.5" y2="491.4" stroke="#5b9ab5" stroke-width="0.6" />
<line x1="652.5" y1="467.9" x2="680.5" y2="481.7" stroke="#5b9ab5" stroke-width="0.6" />
<line x1="677.5" y1="458.3" x2="705.5" y2="472.1" stroke="#5b9ab5" stroke-width="0.6" />
<line x1="702.5" y1="448.7" x2="730.5" y2="462.5" stroke="#5b9ab5" stroke-width="0.6" />
<line x1="739.1" y1="451.3" x2="883.1" y2="522.3" stroke="#5b9ab5" stroke-width="0.7" />
<line x1="764.1" y1="441.6" x2="908.1" y2="512.6" stroke="#5b9ab5" stroke-width="0.6" />
<line x1="789.1" y1="432.0" x2="933.1" y2="503.0" stroke="#5b9ab5" stroke-width="0.6" />
<line x1="814.1" y1="422.4" x2="958.1" y2="493.4" stroke="#5b9ab5" stroke-width="0.6" />
<line x1="839.1" y1="412.8" x2="983.1" y2="483.8" stroke="#5b9ab5" stroke-width="0.6" />
<line x1="864.1" y1="403.1" x2="1008.1" y2="474.1" stroke="#5b9ab5" stroke-width="0.6" />
<line x1="889.1" y1="393.5" x2="1033.1" y2="464.5" stroke="#5b9ab5" stroke-width="0.6" />
<line x1="748.1" y1="455.7" x2="973.7" y2="368.8" stroke="#5b9ab5" stroke-width="0.6" />
<line x1="773.1" y1="468.0" x2="998.7" y2="381.2" stroke="#5b9ab5" stroke-width="0.6" />
<line x1="798.1" y1="480.4" x2="1023.7" y2="393.5" stroke="#5b9ab5" stroke-width="0.6" />
<line x1="823.1" y1="492.7" x2="1048.7" y2="405.8" stroke="#5b9ab5" stroke-width="0.6" />
<line x1="848.1" y1="505.0" x2="1073.7" y2="418.1" stroke="#5b9ab5" stroke-width="0.6" />
<line x1="573.7" y1="505.3" x2="723.7" y2="447.5" stroke="#f2d488" stroke-width="0.6" />
<line x1="583.7" y1="510.2" x2="733.7" y2="452.5" stroke="#f2d488" stroke-width="0.6" />
<line x1="400.2" y1="425.5" x2="522.2" y2="485.6" stroke="#f2d488" stroke-width="0.7" />
<line x1="522.2" y1="485.6" x2="573.7" y2="465.8" stroke="#f2d488" stroke-width="0.7" />
<line x1="435.7" y1="448.7" x2="491.7" y2="427.1" stroke="#f2d488" stroke-width="0.7" />
<line x1="453.7" y1="441.7" x2="531.7" y2="480.2" stroke="#f2d488" stroke-width="0.7" />
<line x1="147.7" y1="299.7" x2="271.7" y2="360.8" stroke="#f2d488" stroke-width="0.7" />
<line x1="167.7" y1="300.7" x2="281.7" y2="356.9" stroke="#f2d488" stroke-width="0.7" />
<line x1="147.7" y1="299.7" x2="197.7" y2="280.4" stroke="#f2d488" stroke-width="0.7" />
<line x1="167.7" y1="300.7" x2="207.7" y2="285.3" stroke="#f2d488" stroke-width="0.7" />
<polygon points="207.7,324.8 211.7,323.3 227.7,331.2 223.7,332.7" fill="#ffffff" stroke="none" stroke-width="0.8" />
<line x1="66.7" y1="272.9" x2="246.7" y2="203.6" stroke="#5b9ab5" stroke-width="0.7" />
<line x1="93.7" y1="286.2" x2="173.7" y2="255.4" stroke="#5b9ab5" stroke-width="0.7" />
<line x1="102.7" y1="259.0" x2="129.7" y2="272.3" stroke="#5b9ab5" stroke-width="0.7" />
<line x1="132.7" y1="247.5" x2="159.7" y2="260.8" stroke="#5b9ab5" stroke-width="0.7" />
<line x1="161.1" y1="236.6" x2="188.1" y2="249.9" stroke="#5b9ab5" stroke-width="0.7" />
<line x1="189.5" y1="225.6" x2="216.5" y2="238.9" stroke="#5b9ab5" stroke-width="0.7" />
<line x1="217.9" y1="214.7" x2="244.9" y2="228.0" stroke="#5b9ab5" stroke-width="0.7" />
<line x1="123.7" y1="227.2" x2="229.7" y2="186.4" stroke="#f2d488" stroke-width="0.7" />
<line x1="141.7" y1="236.1" x2="247.7" y2="195.3" stroke="#f2d488" stroke-width="0.7" />
<line x1="78.7" y1="278.8" x2="268.7" y2="205.7" stroke="#f2d488" stroke-width="0.7" />
<line x1="109.7" y1="220.3" x2="191.7" y2="260.8" stroke="#555" stroke-width="0.7" stroke-dasharray="40 4 6 4"/>
<ellipse cx="110.5" cy="216.5" rx="4.5" ry="3.5" fill="none" stroke="#6ee06e" stroke-width="0.9"/>
<ellipse cx="445" cy="88" rx="8" ry="3.3" fill="none" stroke="#6ee06e" stroke-width="0.9"/>
<line x1="453.0" y1="90.0" x2="466.0" y2="96.0" stroke="#666" stroke-width="0.7" />
<polygon points="175.7,262.6 337.7,342.4 337.7,349.4 175.7,269.6" fill="#9aa098" stroke="#4e524d" stroke-width="0.5" />
<polygon points="175.7,262.6 175.7,269.6 230.7,248.4 230.7,241.4" fill="#6c716b" stroke="#4e524d" stroke-width="0.5" />
<polygon points="175.7,262.6 230.7,241.4 392.7,321.3 337.7,342.4" fill="#858b84" stroke="#4e524d" stroke-width="0.5" />
<polygon points="298.7,357.4 422.7,418.6 422.7,425.6 298.7,364.4" fill="#9aa098" stroke="#4e524d" stroke-width="0.5" />
<polygon points="422.7,418.6 476.7,397.8 476.7,404.8 422.7,425.6" fill="#6c716b" stroke="#4e524d" stroke-width="0.5" />
<polygon points="298.7,357.4 352.7,336.7 476.7,397.8 422.7,418.6" fill="#858b84" stroke="#4e524d" stroke-width="0.5" />
<polygon points="460.2,404.1 587.2,466.7 587.2,473.7 460.2,411.1" fill="#9aa098" stroke="#4e524d" stroke-width="0.5" />
<polygon points="587.2,466.7 695.7,425.0 695.7,432.0 587.2,473.7" fill="#6c716b" stroke="#4e524d" stroke-width="0.5" />
<polygon points="460.2,404.1 476.7,397.8 588.7,453.0 680.7,417.6 695.7,425.0 587.2,466.7" fill="#858b84" stroke="#4e524d" stroke-width="0.5" />
<polygon points="695.7,425.0 736.7,445.2 736.7,452.2 695.7,432.0" fill="#9aa098" stroke="#4e524d" stroke-width="0.5" />
<polygon points="736.7,445.2 856.7,399.0 856.7,406.0 736.7,452.2" fill="#6c716b" stroke="#4e524d" stroke-width="0.5" />
<polygon points="680.7,417.6 800.7,371.4 856.7,399.0 736.7,445.2" fill="#858b84" stroke="#4e524d" stroke-width="0.5" />
<polygon points="800.7,371.4 888.7,337.5 903.7,344.9 815.7,378.8" fill="#858b84" stroke="#4e524d" stroke-width="0.5" />
<polygon points="815.7,378.8 903.7,344.9 903.7,351.9 815.7,385.8" fill="#6c716b" stroke="#4e524d" stroke-width="0.5" />
<polygon points="815.7,378.8 856.7,399.0 856.7,406.0 815.7,385.8" fill="#9aa098" stroke="#4e524d" stroke-width="0.5" />
<g fill="#d58a9a"><circle cx="173.7" cy="265.1" r="0.5"/><circle cx="181.7" cy="258.5" r="0.5"/><circle cx="179.7" cy="268.0" r="0.5"/><circle cx="187.7" cy="261.5" r="0.5"/><circle cx="185.7" cy="271.0" r="0.5"/><circle cx="193.7" cy="264.4" r="0.5"/><circle cx="191.7" cy="273.9" r="0.5"/><circle cx="199.7" cy="267.4" r="0.5"/><circle cx="197.7" cy="276.9" r="0.5"/><circle cx="205.7" cy="270.3" r="0.5"/><circle cx="203.7" cy="279.9" r="0.5"/><circle cx="211.7" cy="273.3" r="0.5"/><circle cx="209.7" cy="282.8" r="0.5"/><circle cx="217.7" cy="276.2" r="0.5"/><circle cx="215.7" cy="285.8" r="0.5"/><circle cx="223.7" cy="279.2" r="0.5"/><circle cx="221.7" cy="288.7" r="0.5"/><circle cx="229.7" cy="282.2" r="0.5"/><circle cx="227.7" cy="291.7" r="0.5"/><circle cx="235.7" cy="285.1" r="0.5"/><circle cx="233.7" cy="294.7" r="0.5"/><circle cx="241.7" cy="288.1" r="0.5"/><circle cx="239.7" cy="297.6" r="0.5"/><circle cx="247.7" cy="291.0" r="0.5"/><circle cx="245.7" cy="300.6" r="0.5"/><circle cx="253.7" cy="294.0" r="0.5"/><circle cx="251.7" cy="303.5" r="0.5"/><circle cx="259.7" cy="296.9" r="0.5"/><circle cx="257.7" cy="306.5" r="0.5"/><circle cx="265.7" cy="299.9" r="0.5"/><circle cx="263.7" cy="309.4" r="0.5"/><circle cx="271.7" cy="302.9" r="0.5"/><circle cx="269.7" cy="312.4" r="0.5"/><circle cx="277.7" cy="305.8" r="0.5"/><circle cx="275.7" cy="315.4" r="0.5"/><circle cx="283.7" cy="308.8" r="0.5"/><circle cx="281.7" cy="318.3" r="0.5"/><circle cx="289.7" cy="311.7" r="0.5"/><circle cx="287.7" cy="321.3" r="0.5"/><circle cx="295.7" cy="314.7" r="0.5"/><circle cx="293.7" cy="324.2" r="0.5"/><circle cx="301.7" cy="317.7" r="0.5"/><circle cx="299.7" cy="327.2" r="0.5"/><circle cx="307.7" cy="320.6" r="0.5"/><circle cx="305.7" cy="330.2" r="0.5"/><circle cx="313.7" cy="323.6" r="0.5"/><circle cx="311.7" cy="333.1" r="0.5"/><circle cx="319.7" cy="326.5" r="0.5"/><circle cx="317.7" cy="336.1" r="0.5"/><circle cx="325.7" cy="329.5" r="0.5"/><circle cx="323.7" cy="339.0" r="0.5"/><circle cx="331.7" cy="332.4" r="0.5"/><circle cx="329.7" cy="342.0" r="0.5"/><circle cx="337.7" cy="335.4" r="0.5"/><circle cx="335.7" cy="344.9" r="0.5"/><circle cx="343.7" cy="338.4" r="0.5"/><circle cx="461.7" cy="407.1" r="0.5"/><circle cx="469.7" cy="400.5" r="0.5"/><circle cx="467.7" cy="410.0" r="0.5"/><circle cx="475.7" cy="403.4" r="0.5"/><circle cx="473.7" cy="413.0" r="0.5"/><circle cx="481.7" cy="406.4" r="0.5"/><circle cx="479.7" cy="415.9" r="0.5"/><circle cx="487.7" cy="409.4" r="0.5"/><circle cx="485.7" cy="418.9" r="0.5"/><circle cx="493.7" cy="412.3" r="0.5"/><circle cx="491.7" cy="421.8" r="0.5"/><circle cx="499.7" cy="415.3" r="0.5"/><circle cx="497.7" cy="424.8" r="0.5"/><circle cx="505.7" cy="418.2" r="0.5"/><circle cx="503.7" cy="427.8" r="0.5"/><circle cx="511.7" cy="421.2" r="0.5"/><circle cx="509.7" cy="430.7" r="0.5"/><circle cx="517.7" cy="424.1" r="0.5"/><circle cx="515.7" cy="433.7" r="0.5"/><circle cx="523.7" cy="427.1" r="0.5"/><circle cx="521.7" cy="436.6" r="0.5"/><circle cx="529.7" cy="430.1" r="0.5"/><circle cx="527.7" cy="439.6" r="0.5"/><circle cx="535.7" cy="433.0" r="0.5"/><circle cx="533.7" cy="442.6" r="0.5"/><circle cx="541.7" cy="436.0" r="0.5"/><circle cx="539.7" cy="445.5" r="0.5"/><circle cx="547.7" cy="438.9" r="0.5"/><circle cx="545.7" cy="448.5" r="0.5"/><circle cx="553.7" cy="441.9" r="0.5"/><circle cx="551.7" cy="451.4" r="0.5"/><circle cx="559.7" cy="444.8" r="0.5"/><circle cx="557.7" cy="454.4" r="0.5"/><circle cx="565.7" cy="447.8" r="0.5"/><circle cx="563.7" cy="457.3" r="0.5"/><circle cx="571.7" cy="450.8" r="0.5"/><circle cx="569.7" cy="460.3" r="0.5"/><circle cx="577.7" cy="453.7" r="0.5"/><circle cx="575.7" cy="463.3" r="0.5"/><circle cx="583.7" cy="456.7" r="0.5"/><circle cx="581.7" cy="466.2" r="0.5"/><circle cx="589.7" cy="459.6" r="0.5"/><circle cx="587.7" cy="469.2" r="0.5"/><circle cx="595.7" cy="462.6" r="0.5"/><circle cx="588.7" cy="469.7" r="0.5"/><circle cx="581.7" cy="462.7" r="0.5"/><circle cx="594.7" cy="467.4" r="0.5"/><circle cx="587.7" cy="460.4" r="0.5"/><circle cx="600.7" cy="465.0" r="0.5"/><circle cx="593.7" cy="458.1" r="0.5"/><circle cx="606.7" cy="462.7" r="0.5"/><circle cx="599.7" cy="455.8" r="0.5"/><circle cx="612.7" cy="460.4" r="0.5"/><circle cx="605.7" cy="453.5" r="0.5"/><circle cx="618.7" cy="458.1" r="0.5"/><circle cx="611.7" cy="451.2" r="0.5"/><circle cx="624.7" cy="455.8" r="0.5"/><circle cx="617.7" cy="448.9" r="0.5"/><circle cx="630.7" cy="453.5" r="0.5"/><circle cx="623.7" cy="446.5" r="0.5"/><circle cx="636.7" cy="451.2" r="0.5"/><circle cx="629.7" cy="444.2" r="0.5"/><circle cx="642.7" cy="448.9" r="0.5"/><circle cx="635.7" cy="441.9" r="0.5"/><circle cx="648.7" cy="446.6" r="0.5"/><circle cx="641.7" cy="439.6" r="0.5"/><circle cx="654.7" cy="444.3" r="0.5"/><circle cx="647.7" cy="437.3" r="0.5"/><circle cx="660.7" cy="441.9" r="0.5"/><circle cx="653.7" cy="435.0" r="0.5"/><circle cx="666.7" cy="439.6" r="0.5"/><circle cx="659.7" cy="432.7" r="0.5"/><circle cx="672.7" cy="437.3" r="0.5"/><circle cx="665.7" cy="430.4" r="0.5"/><circle cx="678.7" cy="435.0" r="0.5"/><circle cx="671.7" cy="428.1" r="0.5"/><circle cx="684.7" cy="432.7" r="0.5"/><circle cx="677.7" cy="425.8" r="0.5"/><circle cx="690.7" cy="430.4" r="0.5"/><circle cx="683.7" cy="423.4" r="0.5"/></g>
<polygon points="212.7,196.6 588.7,382.0 588.7,460.0 212.7,274.6" fill="#d07a80" stroke="#5a2e32" stroke-width="0.6" />
<polygon points="588.7,382.0 988.7,228.0 988.7,306.0 588.7,460.0" fill="#8f5257" stroke="#5a2e32" stroke-width="0.6" />
<polygon points="212.7,214.6 588.7,400.0 588.7,406.0 212.7,220.6" fill="#c26e76" stroke="none" stroke-width="0" />
<line x1="212.7" y1="214.6" x2="588.7" y2="400.0" stroke="#6e3a40" stroke-width="0.6" />
<line x1="212.7" y1="216.1" x2="588.7" y2="401.5" stroke="#e08a90" stroke-width="0.5" />
<line x1="212.7" y1="220.6" x2="588.7" y2="406.0" stroke="#6e3a40" stroke-width="0.6" />
<polygon points="588.7,403.0 988.7,249.0 988.7,254.0 588.7,408.0" fill="#84484e" stroke="none" stroke-width="0" />
<line x1="588.7" y1="403.0" x2="988.7" y2="249.0" stroke="#3e2226" stroke-width="0.6" />
<line x1="588.7" y1="404.5" x2="988.7" y2="250.5" stroke="#a05a60" stroke-width="0.5" />
<line x1="588.7" y1="408.0" x2="988.7" y2="254.0" stroke="#3e2226" stroke-width="0.6" />
<polygon points="474.6,351.0 489.7,358.7 490.3,390.7 474.6,384.0" fill="#d9a66a" stroke="#4a3010" stroke-width="0.7" />
<polygon points="476.1,353.3 488.7,359.7 489.3,388.7 476.1,383.3" fill="#e9c08a" stroke="none" stroke-width="0" />
<polygon points="480.1,356.8 488.2,360.9 488.8,384.4 480.1,381.3" fill="#5d9cb6" stroke="#1e2a30" stroke-width="0.6" />
<polygon points="525.2,376.4 540.8,383.6 540.8,415.2 525.2,409.3" fill="#d9a66a" stroke="#4a3010" stroke-width="0.7" />
<polygon points="526.7,378.6 539.8,384.6 539.8,413.2 526.7,408.5" fill="#e9c08a" stroke="none" stroke-width="0" />
<polygon points="530.7,381.9 539.3,385.9 539.3,409.0 530.7,406.3" fill="#5d9cb6" stroke="#1e2a30" stroke-width="0.6" />
<polygon points="259.7,244.0 276.8,252.5 276.8,281.0 259.7,273.0" fill="#d9a66a" stroke="#4a3010" stroke-width="0.7" />
<polygon points="261.2,246.2 275.8,253.5 275.8,279.0 261.2,272.2" fill="#e9c08a" stroke="none" stroke-width="0" />
<polygon points="265.2,249.7 275.3,254.8 275.3,274.8 265.2,270.2" fill="#5d9cb6" stroke="#1e2a30" stroke-width="0.6" />
<polygon points="311.0,270.0 328.0,278.0 328.0,283.0 311.0,275.0" fill="#d9a66a" stroke="#4a3010" stroke-width="0.6" />
<polygon points="315.0,294.0 328.0,300.5 328.0,304.0 315.0,297.5" fill="#d9a66a" stroke="#4a3010" stroke-width="0.6" />
<polygon points="699.0,370.0 730.0,358.5 730.0,407.0 699.0,418.5" fill="#8a4020" stroke="#2e1408" stroke-width="0.9" />
<line x1="714.5" y1="364.3" x2="714.5" y2="412.5" stroke="#2e1408" stroke-width="0.8" />
<polygon points="783.5,337.0 803.0,331.0 803.0,380.0 783.5,386.0" fill="#8a4020" stroke="#2e1408" stroke-width="0.9" />
<polygon points="792.0,343.0 795.0,342.0 795.0,352.0 792.0,353.0" fill="#4fa8d8" stroke="#1a3040" stroke-width="0.4" />
<path d="M699 418 L706 421 M699 418 A16 9 0 0 0 714.5 412.5 M730 407 L738 411 M730 407 A16 9 0 0 1 714.5 412.5" fill="none" stroke="#2a3ad0" stroke-width="0.9"/>
<path d="M803 379 L811 384 M783.5 386 A20 10 0 0 0 811 384" fill="none" stroke="#2a3ad0" stroke-width="0.9"/>
<polygon points="760.0,398.0 778.0,392.0 795.0,400.0 777.0,406.0" fill="none" stroke="#555" stroke-width="0.7" />
<line x1="760.0" y1="398.0" x2="795.0" y2="400.0" stroke="#555" stroke-width="0.5" />
<line x1="778.0" y1="392.0" x2="777.0" y2="406.0" stroke="#555" stroke-width="0.5" />
<polygon points="375.0,322.7 378.7,324.5 378.7,355.0 375.0,353.3" fill="#dcdcdc" stroke="#666" stroke-width="0.5" />
<polygon points="378.7,325.7 387.7,330.0 387.7,359.5 378.7,355.2" fill="#6fb0cf" stroke="#2c5060" stroke-width="0.6" />
<polygon points="387.7,331.0 416.2,344.5 416.2,371.5 387.7,359.5" fill="#4f9fc6" stroke="#23485a" stroke-width="0.7" />
<line x1="403.5" y1="338.5" x2="403.5" y2="366.0" stroke="#23485a" stroke-width="0.8" />
<polygon points="400.5,343.5 402.5,344.5 402.5,349.0 400.5,348.0" fill="#333" stroke="none" stroke-width="0" />
<line x1="380.0" y1="339.0" x2="386.0" y2="336.0" stroke="#b8d070" stroke-width="0.8" />
<line x1="391.0" y1="343.0" x2="399.0" y2="340.0" stroke="#b8d070" stroke-width="0.8" />
<path d="M387.7 358.7L371.2 365.5Q386 373 402 366.7Q392 374 400.5 379.7L416.2 373.7" fill="none" stroke="#2a3ad0" stroke-width="0.9"/>
<polygon points="301.0,286.0 308.0,289.5 308.0,353.5 301.0,350.0" fill="#d07a80" stroke="#5a2e32" stroke-width="0.5" />
<polygon points="308.0,289.5 315.0,286.8 315.0,350.8 308.0,353.5" fill="#8f5257" stroke="#5a2e32" stroke-width="0.5" />
<polygon points="417.0,344.0 424.0,347.5 424.0,411.5 417.0,408.0" fill="#d07a80" stroke="#5a2e32" stroke-width="0.5" />
<polygon points="424.0,347.5 431.0,344.8 431.0,408.8 424.0,411.5" fill="#8f5257" stroke="#5a2e32" stroke-width="0.5" />
<line x1="301.0" y1="296.0" x2="308.0" y2="299.5" stroke="#6a3a3e" stroke-width="0.5" />
<line x1="417.0" y1="354.0" x2="424.0" y2="357.5" stroke="#6a3a3e" stroke-width="0.5" />
<polygon points="209.3,192.8 555.0,61.4 741.0,91.8 615.0,141.0" fill="#3b3b3b" stroke="#1e1e1e" stroke-width="0.7" />
<polygon points="209.3,192.8 615.0,141.0 588.6,380.2" fill="#484848" stroke="#1e1e1e" stroke-width="0.7" />
<polygon points="588.6,380.2 615.0,141.0 741.0,91.8 933.0,252.5" fill="#444444" stroke="#1e1e1e" stroke-width="0.7" />
<polygon points="209.3,192.8 588.6,380.2 588.6,384.2 211.3,196.8" fill="#7a7a7a" stroke="none" stroke-width="0" />
<line x1="209.9" y1="194.2" x2="588.6" y2="381.6" stroke="#f8f8f8" stroke-width="1.3" />
<line x1="210.5" y1="195.8" x2="588.6" y2="383.2" stroke="#c8c8c8" stroke-width="0.8" />
<line x1="209.3" y1="192.8" x2="588.6" y2="380.2" stroke="#1e1e1e" stroke-width="0.7" />
<polygon points="588.6,380.2 933.0,252.5 933.0,256.5 588.6,384.2" fill="#7a7a7a" stroke="none" stroke-width="0" />
<line x1="588.6" y1="381.6" x2="933.0" y2="253.9" stroke="#f8f8f8" stroke-width="1.3" />
<line x1="588.6" y1="383.2" x2="933.0" y2="255.5" stroke="#c8c8c8" stroke-width="0.8" />
<line x1="588.6" y1="380.2" x2="933.0" y2="252.5" stroke="#1e1e1e" stroke-width="0.7" />
<polygon points="298.5,284.0 338.4,256.0 461.0,316.5 422.0,344.6" fill="#474747" stroke="#1a1a1a" stroke-width="0.7" />
<polygon points="298.5,284.0 422.0,344.6 422.0,348.6 298.5,288.0" fill="#7a7a7a" stroke="none" stroke-width="0" />
<line x1="298.5" y1="285.4" x2="422.0" y2="346.0" stroke="#f8f8f8" stroke-width="1.3" />
<line x1="298.5" y1="287.0" x2="422.0" y2="347.6" stroke="#c8c8c8" stroke-width="0.8" />
<line x1="298.5" y1="284.0" x2="422.0" y2="344.6" stroke="#1e1e1e" stroke-width="0.7" />
<polygon points="422.0,344.6 461.0,316.5 461.0,320.5 422.0,348.6" fill="#7a7a7a" stroke="none" stroke-width="0" />
<line x1="422.0" y1="346.0" x2="461.0" y2="317.9" stroke="#f8f8f8" stroke-width="1.3" />
<line x1="422.0" y1="347.6" x2="461.0" y2="319.5" stroke="#c8c8c8" stroke-width="0.8" />
<line x1="422.0" y1="344.6" x2="461.0" y2="316.5" stroke="#1e1e1e" stroke-width="0.7" />
<polygon points="301.0,292.0 308.0,295.5 308.0,302.0 301.0,298.5" fill="#c26e76" stroke="#6a3a3e" stroke-width="0.5" />
<polygon points="308.0,295.5 315.0,292.8 315.0,299.3 308.0,302.0" fill="#84484e" stroke="#4a2a2e" stroke-width="0.5" />
<polygon points="417.0,351.0 424.0,354.5 424.0,361.0 417.0,357.5" fill="#c26e76" stroke="#6a3a3e" stroke-width="0.5" />
<polygon points="424.0,354.5 431.0,351.8 431.0,358.3 424.0,361.0" fill="#84484e" stroke="#4a2a2e" stroke-width="0.5" />
<path d="M832 161 A29 12 0 0 1 802 143" fill="none" stroke="#a0a0a0" stroke-width="4.5" opacity="0.55"/>
<path d="M800 150 A28 11 0 0 0 840 160" fill="none" stroke="#8a8a8a" stroke-width="1.8" opacity="0.6"/>
<path d="M840 160 A28 11 0 0 0 856 150" fill="none" stroke="#9a9a9a" stroke-width="0.8" opacity="0.6"/>
<g opacity="0.6">
<polygon points="810.3,120.7 828.6,130.5 828.6,154.0 810.3,144.0" fill="#f2f2f2" stroke="#9a9a9a" stroke-width="0.7" stroke-dasharray="2 1.2"/>
<polygon points="828.6,130.5 847.0,122.0 847.0,146.0 828.6,154.0" fill="#ececec" stroke="#9a9a9a" stroke-width="0.7" stroke-dasharray="2 1.2"/>
<polygon points="810.3,120.7 829.0,112.0 847.0,119.0 828.6,130.5" fill="#f6f6f6" stroke="#9a9a9a" stroke-width="0.7" stroke-dasharray="2 1.2"/>
</g>
<text x="814" y="135" font-size="5" fill="#9a9a9a" font-family="Liberation Sans" transform="rotate(28 814 135)">LEFT</text>
<text x="831" y="147" font-size="5" fill="#9a9a9a" font-family="Liberation Sans" transform="rotate(-24 831 147)">FRONT</text>
<line x1="806.0" y1="140.0" x2="810.0" y2="137.0" stroke="#999" stroke-width="0.8" />
</svg>
<svg class="a" style="left:954px;top:74px" width="646" height="436" viewBox="954 74 646 436">
<path d="M979.5 127H1031.1M1044.3 127H1057.3M1070.5 127H1122.1M1135.3 127H1148.3M1161.5 127H1213.1M1226.3 127H1239.3M1252.5 127H1304.1M1317.3 127H1330.3M1343.5 127H1395.1M1408.3 127H1421.3M1434.5 127H1486.1M1499.3 127H1512.3M1525.5 127H1577.1M1590.3 127H1600.0" stroke="#555" stroke-width="1" fill="none"/>
<path d="M979.5 254.4H1031.1M1044.3 254.4H1057.3M1070.5 254.4H1122.1" stroke="#555" stroke-width="1" fill="none"/>
<line x1="1143.6" y1="254.3" x2="1600" y2="254.3" stroke="#444" stroke-width="0.9" />
<line x1="1041" y1="272" x2="1600" y2="132.2" stroke="#333" stroke-width="0.9" />
<line x1="1042" y1="277.6" x2="1600" y2="138.8" stroke="#333" stroke-width="0.9" />
<path d="M1036.5 272.5Q1038 277.5 1041.5 277.5L1041.5 271.5" fill="none" stroke="#222" stroke-width="1"/>
<line x1="1041.8" y1="271.5" x2="1041.8" y2="277.5" stroke="#111" stroke-width="1.4" />
<rect x="1042.4" y="278.2" width="17" height="125.8" fill="#fff" stroke="#333" stroke-width="0.9"/>
<path d="M1042.4 280.8H1059.4M1046.5 280.8V283.4M1053.5 280.8V283.4M1042.4 283.4H1059.4M1050.0 283.4V286.0M1057.0 283.4V286.0M1042.4 286.0H1059.4M1046.5 286.0V288.6M1053.5 286.0V288.6M1042.4 288.6H1059.4M1050.0 288.6V291.2M1057.0 288.6V291.2M1042.4 301.6H1059.4M1046.5 301.6V304.2M1053.5 301.6V304.2M1042.4 304.2H1059.4M1050.0 304.2V306.8M1057.0 304.2V306.8M1042.4 306.8H1059.4M1046.5 306.8V309.4M1053.5 306.8V309.4M1042.4 309.4H1059.4M1050.0 309.4V312.0M1057.0 309.4V312.0M1042.4 312.0H1059.4M1046.5 312.0V314.6M1053.5 312.0V314.6M1042.4 314.6H1059.4M1050.0 314.6V317.2M1057.0 314.6V317.2M1042.4 317.2H1059.4M1046.5 317.2V319.8M1053.5 317.2V319.8M1042.4 319.8H1059.4M1050.0 319.8V322.4M1057.0 319.8V322.4M1042.4 322.4H1059.4M1046.5 322.4V325.0M1053.5 322.4V325.0M1042.4 325.0H1059.4M1050.0 325.0V327.6M1057.0 325.0V327.6M1042.4 327.6H1059.4M1046.5 327.6V330.2M1053.5 327.6V330.2M1042.4 330.2H1059.4M1050.0 330.2V332.8M1057.0 330.2V332.8M1042.4 332.8H1059.4M1046.5 332.8V335.4M1053.5 332.8V335.4M1042.4 335.4H1059.4M1050.0 335.4V338.0M1057.0 335.4V338.0M1042.4 338.0H1059.4M1046.5 338.0V340.6M1053.5 338.0V340.6M1042.4 340.6H1059.4M1050.0 340.6V343.2M1057.0 340.6V343.2M1042.4 343.2H1059.4M1046.5 343.2V345.8M1053.5 343.2V345.8M1042.4 345.8H1059.4M1050.0 345.8V348.4M1057.0 345.8V348.4M1042.4 348.4H1059.4M1046.5 348.4V351.0M1053.5 348.4V351.0M1042.4 351.0H1059.4M1050.0 351.0V353.6M1057.0 351.0V353.6M1042.4 353.6H1059.4M1046.5 353.6V356.2M1053.5 353.6V356.2M1042.4 356.2H1059.4M1050.0 356.2V358.8M1057.0 356.2V358.8M1042.4 358.8H1059.4M1046.5 358.8V361.4M1053.5 358.8V361.4M1042.4 361.4H1059.4M1050.0 361.4V364.0M1057.0 361.4V364.0M1042.4 364.0H1059.4M1046.5 364.0V366.6M1053.5 364.0V366.6M1042.4 366.6H1059.4M1050.0 366.6V369.2M1057.0 366.6V369.2M1042.4 369.2H1059.4M1046.5 369.2V371.8M1053.5 369.2V371.8M1042.4 371.8H1059.4M1050.0 371.8V374.4M1057.0 371.8V374.4M1042.4 374.4H1059.4M1046.5 374.4V377.0M1053.5 374.4V377.0M1042.4 377.0H1059.4M1050.0 377.0V379.6M1057.0 377.0V379.6M1042.4 379.6H1059.4M1046.5 379.6V382.2M1053.5 379.6V382.2M1042.4 382.2H1059.4M1050.0 382.2V384.8M1057.0 382.2V384.8M1042.4 384.8H1059.4M1046.5 384.8V387.4M1053.5 384.8V387.4M1042.4 387.4H1059.4M1050.0 387.4V390.0M1057.0 387.4V390.0M1042.4 390.0H1059.4M1046.5 390.0V392.6M1053.5 390.0V392.6M1042.4 392.6H1059.4M1050.0 392.6V395.2M1057.0 392.6V395.2M1042.4 395.2H1059.4M1046.5 395.2V397.8M1053.5 395.2V397.8M1042.4 397.8H1059.4M1050.0 397.8V400.4M1057.0 397.8V400.4M1042.4 400.4H1059.4M1046.5 400.4V403.0M1053.5 400.4V403.0M1042.4 291.5H1059.4M1042.4 300.4H1059.4M1045.5 291.5V300.4M1049 291.5V300.4M1052.5 291.5V300.4M1056 291.5V300.4" stroke="#777" stroke-width="0.6" fill="none"/>
<line x1="1131.2" y1="249" x2="1131.2" y2="404" stroke="#333" stroke-width="0.9" />
<line x1="1143.6" y1="254" x2="1143.6" y2="404" stroke="#333" stroke-width="0.9" />
<line x1="1130" y1="249" x2="1130" y2="256" stroke="#222" stroke-width="1.3" />
<line x1="1131.2" y1="282.5" x2="1143.6" y2="282.5" stroke="#555" stroke-width="0.7" />
<line x1="1134.5" y1="282.5" x2="1134.5" y2="404" stroke="#555" stroke-width="0.7" />
<line x1="1140.2" y1="282.5" x2="1140.2" y2="404" stroke="#555" stroke-width="0.7" />
<line x1="1136.2" y1="284" x2="1136.2" y2="404" stroke="#888" stroke-width="0.6" />
<line x1="1138.5" y1="284" x2="1138.5" y2="404" stroke="#888" stroke-width="0.6" />
<line x1="1134.5" y1="297" x2="1140.2" y2="297" stroke="#555" stroke-width="0.6" />
<line x1="1130" y1="300" x2="1130" y2="355" stroke="#666" stroke-width="0.7" />
<line x1="1144.8" y1="300" x2="1144.8" y2="355" stroke="#666" stroke-width="0.7" />
<rect x="1134.5" y="358" width="4.5" height="8" fill="none" stroke="#555" stroke-width="0.6"/>
<line x1="954" y1="404" x2="1600" y2="404" stroke="#444" stroke-width="0.9" />
<line x1="1041" y1="404" x2="1041" y2="417.2" stroke="#444" stroke-width="0.9" />
<line x1="1041" y1="417.2" x2="1600" y2="417.2" stroke="#444" stroke-width="0.9" />
<line x1="954" y1="482.3" x2="1600" y2="482.3" stroke="#555" stroke-width="0.9" />
<path d="M1080 405H1090M1100 405H1110M1150 405H1160M1175 405H1185M1190 405H1200M1235 405H1245M1260 405H1270M1280 405H1290M1320 405H1330M1350 405H1360M1400 405H1410M1420 405H1430M1450 405H1460M1500 405H1510M1515 405H1525M1530 405H1540M1577 405H1587" stroke="#8fd0f0" stroke-width="0.8" fill="none"/>
<path d="M1578.8 404V309.7H1600M1582 404V313.5H1600" fill="none" stroke="#333" stroke-width="0.9"/>
<rect x="1588" y="319" width="6" height="27.5" fill="none" stroke="#333" stroke-width="0.8"/>
<path d="M1582 313.5L1600 340M1582 404L1600 378" fill="none" stroke="#555" stroke-width="0.6" stroke-dasharray="3 2"/>
</svg>
<div class="a" style="left:3px;top:510px;width:97px;height:10px;background:#f0efea;"></div>
<div class="a" style="left:13px;top:510px;width:67px;height:10px;background:#d7d4cc;border:1px solid #fff;border-right-color:#555;border-bottom-color:#555;"></div>
<div class="a" style="left:3px;top:510px;width:10px;height:10px;background:#ecebe6;border:1px solid #fff;border-right-color:#555;border-bottom-color:#555;"></div>
<div class="a" style="left:90px;top:510px;width:10px;height:10px;background:#ecebe6;border:1px solid #fff;border-right-color:#555;border-bottom-color:#555;"></div>
<div class="a" style="left:6px;top:512.5px;width:0;height:0;border-top:2.5px solid transparent;border-bottom:2.5px solid transparent;border-right:3px solid #000"></div>
<div class="a" style="left:94px;top:512.5px;width:0;height:0;border-top:2.5px solid transparent;border-bottom:2.5px solid transparent;border-left:3px solid #000"></div>
<div class="a" style="left:849px;top:510px;width:97px;height:10px;background:#f0efea;"></div>
<div class="a" style="left:859px;top:510px;width:67px;height:10px;background:#d7d4cc;border:1px solid #fff;border-right-color:#555;border-bottom-color:#555;"></div>
<div class="a" style="left:849px;top:510px;width:10px;height:10px;background:#ecebe6;border:1px solid #fff;border-right-color:#555;border-bottom-color:#555;"></div>
<div class="a" style="left:936px;top:510px;width:10px;height:10px;background:#ecebe6;border:1px solid #fff;border-right-color:#555;border-bottom-color:#555;"></div>
<div class="a" style="left:852px;top:512.5px;width:0;height:0;border-top:2.5px solid transparent;border-bottom:2.5px solid transparent;border-right:3px solid #000"></div>
<div class="a" style="left:940px;top:512.5px;width:0;height:0;border-top:2.5px solid transparent;border-bottom:2.5px solid transparent;border-left:3px solid #000"></div>
<div class="a" style="left:108px;top:510px;width:739px;height:10px;background:#e4e2dc;"></div>
<div class="t" style="left:114px;top:511.4px;color:#222;font-size:6.8px">1/8" = 1'-0"</div>
<svg class="a" style="left:152px;top:510px" width="10" height="10"><rect x="1" y="2" width="8" height="6" fill="#fff" stroke="#333" stroke-width="0.8"/><path d="M1 2 L9 8 M9 2 L1 8" stroke="#333" stroke-width="0.6"/></svg>
<svg class="a" style="left:164px;top:510px" width="10" height="10"><path d="M1 4 L3 2 L9 2 L9 6 L7 8 L1 8 Z" fill="#6aa7e0" stroke="#1f5fa8" stroke-width="0.8"/></svg>
<svg class="a" style="left:175px;top:510px" width="10" height="10"><circle cx="4" cy="4" r="2.5" fill="#8bc4f0" stroke="#2266aa" stroke-width="0.8"/><path d="M5 6 L9 9 M9 6 L5 9" stroke="#e02020" stroke-width="1.2"/></svg>
<svg class="a" style="left:186px;top:510px" width="10" height="10"><path d="M1 5 L4 2 L8 4" fill="none" stroke="#555" stroke-width="0.8"/><circle cx="7" cy="6" r="2" fill="#8bc4f0" stroke="#2266aa" stroke-width="0.8"/></svg>
<svg class="a" style="left:197px;top:510px" width="10" height="10"><rect x="1" y="3" width="6" height="4" fill="#7aaee0" stroke="#22559a" stroke-width="0.8"/><path d="M5 5 L9 9 M9 5 L5 9" stroke="#e02020" stroke-width="1.2"/></svg>
<svg class="a" style="left:208px;top:510px" width="10" height="10"><rect x="1" y="3" width="6" height="4" fill="#7aaee0" stroke="#22559a" stroke-width="0.8"/><circle cx="7" cy="5" r="2" fill="#8bc4f0" stroke="#2266aa" stroke-width="0.8"/></svg>
<svg class="a" style="left:220px;top:510px" width="10" height="10"><path d="M1 4 L4 8 L6 3 L9 5" fill="none" stroke="#444" stroke-width="0.9"/></svg>
<svg class="a" style="left:233px;top:510px" width="10" height="10"><path d="M5 2 L7 5 L5 8 L3 5 Z" fill="#9cd0f5" stroke="#2f7fc8" stroke-width="0.8"/></svg>
<div class="a" style="left:244px;top:510px;width:9px;height:10px;background:#ecebe6;border:1px solid #fff;border-right-color:#404040;border-bottom-color:#404040;"></div>
<div class="a" style="left:246px;top:512.5px;width:0;height:0;border-top:2.5px solid transparent;border-bottom:2.5px solid transparent;border-right:3px solid #000"></div>
<div class="a" style="left:954px;top:510px;width:646px;height:10px;background:#e4e2dc;"></div>
<div class="t" style="left:960px;top:511.4px;color:#222;font-size:6.8px">1/8" = 1'-0"</div>
<svg class="a" style="left:998px;top:510px" width="10" height="10"><rect x="1" y="2" width="8" height="6" fill="#fff" stroke="#333" stroke-width="0.8"/><path d="M1 2 L9 8 M9 2 L1 8" stroke="#333" stroke-width="0.6"/></svg>
<svg class="a" style="left:1010px;top:510px" width="10" height="10"><path d="M1 4 L3 2 L9 2 L9 6 L7 8 L1 8 Z" fill="#6aa7e0" stroke="#1f5fa8" stroke-width="0.8"/></svg>
<svg class="a" style="left:1021px;top:510px" width="10" height="10"><circle cx="4" cy="4" r="2.5" fill="#8bc4f0" stroke="#2266aa" stroke-width="0.8"/><path d="M5 6 L9 9 M9 6 L5 9" stroke="#e02020" stroke-width="1.2"/></svg>
<svg class="a" style="left:1032px;top:510px" width="10" height="10"><rect x="1" y="3" width="6" height="4" fill="#7aaee0" stroke="#22559a" stroke-width="0.8"/><path d="M5 5 L9 9 M9 5 L5 9" stroke="#e02020" stroke-width="1.2"/></svg>
<svg class="a" style="left:1044px;top:510px" width="10" height="10"><rect x="1" y="3" width="6" height="4" fill="#7aaee0" stroke="#22559a" stroke-width="0.8"/><circle cx="7" cy="5" r="2" fill="#8bc4f0" stroke="#2266aa" stroke-width="0.8"/></svg>
<svg class="a" style="left:1056px;top:510px" width="10" height="10"><path d="M1 4 L4 8 L6 3 L9 5" fill="none" stroke="#444" stroke-width="0.9"/></svg>
<svg class="a" style="left:1068px;top:510px" width="10" height="10"><path d="M5 2 L7 5 L5 8 L3 5 Z" fill="#9cd0f5" stroke="#2f7fc8" stroke-width="0.8"/></svg>
<div class="a" style="left:1079px;top:510px;width:9px;height:10px;background:#ecebe6;border:1px solid #fff;border-right-color:#404040;border-bottom-color:#404040;"></div>
<div class="a" style="left:1081px;top:512.5px;width:0;height:0;border-top:2.5px solid transparent;border-bottom:2.5px solid transparent;border-right:3px solid #000"></div>
<div class="a" style="left:558px;top:510px;width:9px;height:10px;background:#d4d0c8;border:1px solid #fff;border-right-color:#404040;border-bottom-color:#404040;"></div>
<div class="a" style="left:1397px;top:510px;width:9px;height:10px;background:#d4d0c8;border:1px solid #fff;border-right-color:#404040;border-bottom-color:#404040;"></div>
<div class="a" style="left:0px;top:520px;width:1600px;height:14px;background:#d4d0c8;border-top:1.5px solid #aaa69e;"></div>
<div class="t" style="left:1px;top:523.9px;color:#111;font-size:6.8px">Click to select, TAB for alternates, CTRL adds, SHIFT unselects.</div>
<div class="t" style="left:847px;top:523.9px;color:#111;font-size:6.8px">Click to select, TAB for alternates, CTRL adds, SHIFT unselects.</div>
<div class="a" style="left:657px;top:522px;width:1px;height:12px;background:#a09c94;"></div>
<div class="a" style="left:658px;top:522px;width:1px;height:12px;background:#fff;"></div>
<div class="a" style="left:723px;top:522px;width:1px;height:12px;background:#a09c94;"></div>
<div class="a" style="left:724px;top:522px;width:1px;height:12px;background:#fff;"></div>
<div class="a" style="left:778px;top:522px;width:1px;height:12px;background:#a09c94;"></div>
<div class="a" style="left:779px;top:522px;width:1px;height:12px;background:#fff;"></div>
<div class="a" style="left:836px;top:522px;width:1px;height:12px;background:#a09c94;"></div>
<div class="a" style="left:837px;top:522px;width:1px;height:12px;background:#fff;"></div>
<div class="a" style="left:1502px;top:522px;width:1px;height:12px;background:#a09c94;"></div>
<div class="a" style="left:1503px;top:522px;width:1px;height:12px;background:#fff;"></div>
<div class="a" style="left:1567px;top:522px;width:1px;height:12px;background:#a09c94;"></div>
<div class="a" style="left:1568px;top:522px;width:1px;height:12px;background:#fff;"></div>
<div class="a" style="left:782px;top:524px;width:6px;height:7px;background:#fff;border:1px solid #7a7a7a;"></div>
<div class="t" style="left:790px;top:523.9px;color:#111;font-size:6.8px">Press &amp; Drag</div>
<svg class="a" style="left:838px;top:522px" width="9" height="12"><path d="M1 2 L8 2 L5 6 L5 10 L4 10 L4 6 Z" fill="#e8e8e8" stroke="#555" stroke-width="0.8"/></svg>
</body></html>
